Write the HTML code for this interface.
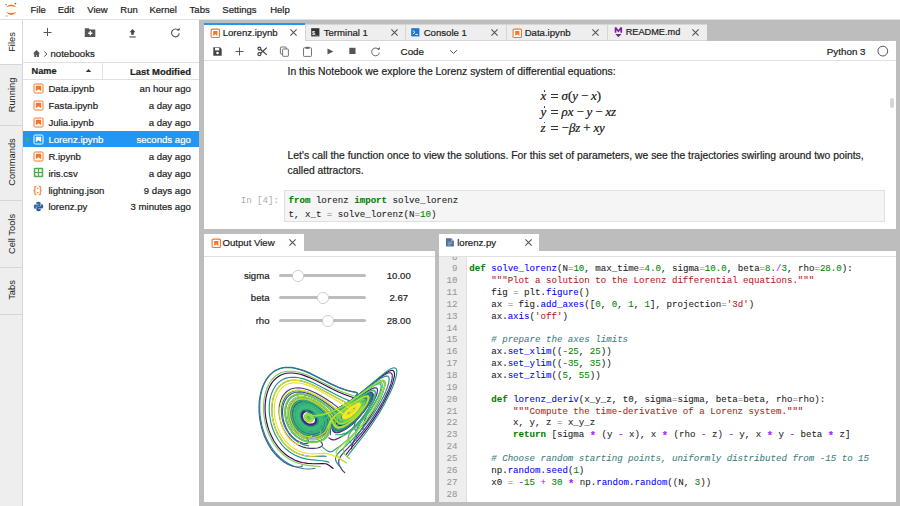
<!DOCTYPE html>
<html><head><meta charset="utf-8"><style>
html,body{margin:0;padding:0;width:900px;height:506px;overflow:hidden;background:#fff;position:relative}
.a{position:absolute}
.t{white-space:pre;-webkit-text-stroke:0.2px currentColor}
i{font-style:italic}
b{font-weight:700}
</style></head><body>
<div class="a" style="left:0px;top:0px;width:900px;height:19px;background:#fff;"></div><div class="a" style="left:0px;top:19px;width:900px;height:1px;background:#E0E0E0;"></div><svg class="a" style="left:0px;top:0px;" width="24" height="19" viewBox="0 0 24 19"><path d="M5.8 7.6 Q11.3 1.2 16.8 7.6 Q11.3 5.0 5.8 7.6z" fill="#F37726"/>
<path d="M5.8 11.8 Q11.3 18.2 16.8 11.8 Q11.3 14.4 5.8 11.8z" fill="#F37726"/>
<circle cx="6.1" cy="4.7" r="0.75" fill="#767677"/><circle cx="15.4" cy="3.5" r="0.85" fill="#616262"/><circle cx="6.9" cy="16" r="0.75" fill="#989798"/></svg><div class="a t" style="left:30.5px;top:4.03px;line-height:12.35px;font-size:9.5px;color:#222222;font-weight:400;font-family:'Liberation Sans', sans-serif;font-style:normal;">File</div><div class="a t" style="left:57.699999999999996px;top:4.03px;line-height:12.35px;font-size:9.5px;color:#222222;font-weight:400;font-family:'Liberation Sans', sans-serif;font-style:normal;">Edit</div><div class="a t" style="left:87.3px;top:4.03px;line-height:12.35px;font-size:9.5px;color:#222222;font-weight:400;font-family:'Liberation Sans', sans-serif;font-style:normal;">View</div><div class="a t" style="left:120.3px;top:4.03px;line-height:12.35px;font-size:9.5px;color:#222222;font-weight:400;font-family:'Liberation Sans', sans-serif;font-style:normal;">Run</div><div class="a t" style="left:149.5px;top:4.03px;line-height:12.35px;font-size:9.5px;color:#222222;font-weight:400;font-family:'Liberation Sans', sans-serif;font-style:normal;">Kernel</div><div class="a t" style="left:189.60000000000002px;top:4.03px;line-height:12.35px;font-size:9.5px;color:#222222;font-weight:400;font-family:'Liberation Sans', sans-serif;font-style:normal;">Tabs</div><div class="a t" style="left:222.3px;top:4.03px;line-height:12.35px;font-size:9.5px;color:#222222;font-weight:400;font-family:'Liberation Sans', sans-serif;font-style:normal;">Settings</div><div class="a t" style="left:270.2px;top:4.03px;line-height:12.35px;font-size:9.5px;color:#222222;font-weight:400;font-family:'Liberation Sans', sans-serif;font-style:normal;">Help</div><div class="a" style="left:199px;top:20px;width:701px;height:486px;background:#BDBDBD;"></div><div class="a" style="left:0px;top:20px;width:22px;height:486px;background:#EEEEEE;"></div><div class="a" style="left:22px;top:20px;width:1px;height:486px;background:#D6D6D6;"></div><div class="a" style="left:0px;top:20px;width:22px;height:44.5px;background:#fff;"></div><div class="a" style="left:0px;top:64.0px;width:22px;height:1.0px;background:#D6D6D6;"></div><div class="a" style="left:-38px;top:36px;width:100px;height:12px;line-height:12px;text-align:center;font-size:9.3px;color:#222222;font-family:'Liberation Sans', sans-serif;transform:rotate(-90deg);white-space:pre">Files</div><div class="a" style="left:0px;top:124.5px;width:22px;height:1.0px;background:#D6D6D6;"></div><div class="a" style="left:-38px;top:89px;width:100px;height:12px;line-height:12px;text-align:center;font-size:9.3px;color:#222222;font-family:'Liberation Sans', sans-serif;transform:rotate(-90deg);white-space:pre">Running</div><div class="a" style="left:0px;top:199.5px;width:22px;height:1.0px;background:#D6D6D6;"></div><div class="a" style="left:-38px;top:156px;width:100px;height:12px;line-height:12px;text-align:center;font-size:9.3px;color:#222222;font-family:'Liberation Sans', sans-serif;transform:rotate(-90deg);white-space:pre">Commands</div><div class="a" style="left:0px;top:266.5px;width:22px;height:1.0px;background:#D6D6D6;"></div><div class="a" style="left:-38px;top:228px;width:100px;height:12px;line-height:12px;text-align:center;font-size:9.3px;color:#222222;font-family:'Liberation Sans', sans-serif;transform:rotate(-90deg);white-space:pre">Cell Tools</div><div class="a" style="left:0px;top:313.5px;width:22px;height:1.0px;background:#D6D6D6;"></div><div class="a" style="left:-38px;top:284px;width:100px;height:12px;line-height:12px;text-align:center;font-size:9.3px;color:#222222;font-family:'Liberation Sans', sans-serif;transform:rotate(-90deg);white-space:pre">Tabs</div><div class="a" style="left:23px;top:20px;width:176px;height:486px;background:#fff;"></div><svg class="a" style="left:42px;top:27px;" width="10" height="10" viewBox="0 0 10 10"><path d="M5.5 1v8M1.5 5.5h8" stroke="#555" stroke-width="1"/></svg><svg class="a" style="left:84px;top:27px;" width="12" height="11" viewBox="0 0 12 11"><path d="M0.8 1.2h3.8l1.2 1.3h5.5v7.5H0.8z" fill="#555"/><path d="M6.3 4.1v4.2M4.2 6.2h4.2" stroke="#fff" stroke-width="1.4"/></svg><svg class="a" style="left:128px;top:27px;" width="9" height="11" viewBox="0 0 9 11"><path d="M1.5 5.2L4.5 2l3 3.2H5.8v2.6H3.2V5.2z" fill="#444"/><rect x="1.3" y="9.3" width="6.4" height="1.3" fill="#666"/></svg><svg class="a" style="left:170px;top:27px;" width="11" height="11" viewBox="0 0 11 11"><path d="M8.6 3.7A3.9 3.9 0 1 0 9.3 6.4" stroke="#555" stroke-width="1.1" fill="none"/><path d="M6.5 3.3h3.2V0.8z" fill="#555"/></svg><svg class="a" style="left:32px;top:49px;" width="9" height="9" viewBox="0 0 9 9"><path d="M4.5 1L1 4.5h1.2V8h2V6h0.7v2h2V4.5H8z" fill="#555"/></svg><svg class="a" style="left:43px;top:50px;" width="6" height="8" viewBox="0 0 6 8"><path d="M1.3 1.4L3.9 4L1.3 6.6" stroke="#555" stroke-width="1" fill="none"/></svg><div class="a t" style="left:50.5px;top:48.46px;line-height:12.48px;font-size:9.6px;color:#222222;font-weight:400;font-family:'Liberation Sans', sans-serif;font-style:normal;">notebooks</div><div class="a" style="left:23px;top:62px;width:176px;height:1px;background:#E0E0E0;"></div><div class="a" style="left:23px;top:79px;width:176px;height:1px;background:#E0E0E0;"></div><div class="a" style="left:102px;top:63px;width:1px;height:16px;background:#E0E0E0;"></div><div class="a t" style="left:31.5px;top:65.72px;line-height:11.96px;font-size:9.2px;color:#222222;font-weight:700;font-family:'Liberation Sans', sans-serif;font-style:normal;">Name</div><svg class="a" style="left:85px;top:68px;" width="7" height="5" viewBox="0 0 7 5"><path d="M0.8 4L3.5 1L6.2 4z" fill="#333"/></svg><div class="a t" style="left:-409.1px;width:600px;text-align:right;top:65.56px;line-height:12.29px;font-size:9.45px;color:#222222;font-weight:700;font-family:'Liberation Sans', sans-serif;font-style:normal;">Last Modified</div><svg class="a" style="left:33px;top:83.12499999999999px;" width="11" height="11" viewBox="0 0 11 11"><rect x="1" y="1" width="9" height="9" rx="1.2" fill="#fff" stroke="#F37726" stroke-width="1"/><path d="M2.8 2.8h5.4v5.4L5.5 6.3 2.8 8.2z" fill="#F37726"/></svg><div class="a t" style="left:48.4px;top:83.48px;line-height:12.48px;font-size:9.6px;color:#222222;font-weight:400;font-family:'Liberation Sans', sans-serif;font-style:normal;">Data.ipynb</div><div class="a t" style="left:-409.2px;width:600px;text-align:right;top:83.48px;line-height:12.48px;font-size:9.6px;color:#222222;font-weight:400;font-family:'Liberation Sans', sans-serif;font-style:normal;">an hour ago</div><svg class="a" style="left:33px;top:99.97499999999998px;" width="11" height="11" viewBox="0 0 11 11"><rect x="1" y="1" width="9" height="9" rx="1.2" fill="#fff" stroke="#F37726" stroke-width="1"/><path d="M2.8 2.8h5.4v5.4L5.5 6.3 2.8 8.2z" fill="#F37726"/></svg><div class="a t" style="left:48.4px;top:100.33px;line-height:12.48px;font-size:9.6px;color:#222222;font-weight:400;font-family:'Liberation Sans', sans-serif;font-style:normal;">Fasta.ipynb</div><div class="a t" style="left:-409.2px;width:600px;text-align:right;top:100.33px;line-height:12.48px;font-size:9.6px;color:#222222;font-weight:400;font-family:'Liberation Sans', sans-serif;font-style:normal;">a day ago</div><svg class="a" style="left:33px;top:116.82499999999999px;" width="11" height="11" viewBox="0 0 11 11"><rect x="1" y="1" width="9" height="9" rx="1.2" fill="#fff" stroke="#F37726" stroke-width="1"/><path d="M2.8 2.8h5.4v5.4L5.5 6.3 2.8 8.2z" fill="#F37726"/></svg><div class="a t" style="left:48.4px;top:117.19px;line-height:12.48px;font-size:9.6px;color:#222222;font-weight:400;font-family:'Liberation Sans', sans-serif;font-style:normal;">Julia.ipynb</div><div class="a t" style="left:-409.2px;width:600px;text-align:right;top:117.19px;line-height:12.48px;font-size:9.6px;color:#222222;font-weight:400;font-family:'Liberation Sans', sans-serif;font-style:normal;">a day ago</div><div class="a" style="left:23px;top:131px;width:176px;height:16.19999999999999px;background:#2196F3;"></div><svg class="a" style="left:25px;top:137.15px;" width="5" height="5" viewBox="0 0 5 5"><circle cx="2.5" cy="2.5" r="1.8" fill="#4CAF50"/></svg><svg class="a" style="left:33px;top:133.675px;" width="11" height="11" viewBox="0 0 11 11"><rect x="1" y="1" width="9" height="9" rx="1.2" fill="#2196F3" stroke="#fff" stroke-width="1"/><path d="M2.8 2.8h5.4v5.4L5.5 6.3 2.8 8.2z" fill="#fff"/></svg><div class="a t" style="left:48.4px;top:134.03px;line-height:12.48px;font-size:9.6px;color:#fff;font-weight:400;font-family:'Liberation Sans', sans-serif;font-style:normal;">Lorenz.ipynb</div><div class="a t" style="left:-409.2px;width:600px;text-align:right;top:134.03px;line-height:12.48px;font-size:9.6px;color:#fff;font-weight:400;font-family:'Liberation Sans', sans-serif;font-style:normal;">seconds ago</div><svg class="a" style="left:33px;top:150.525px;" width="11" height="11" viewBox="0 0 11 11"><rect x="1" y="1" width="9" height="9" rx="1.2" fill="#fff" stroke="#F37726" stroke-width="1"/><path d="M2.8 2.8h5.4v5.4L5.5 6.3 2.8 8.2z" fill="#F37726"/></svg><div class="a t" style="left:48.4px;top:150.88px;line-height:12.48px;font-size:9.6px;color:#222222;font-weight:400;font-family:'Liberation Sans', sans-serif;font-style:normal;">R.ipynb</div><div class="a t" style="left:-409.2px;width:600px;text-align:right;top:150.88px;line-height:12.48px;font-size:9.6px;color:#222222;font-weight:400;font-family:'Liberation Sans', sans-serif;font-style:normal;">a day ago</div><svg class="a" style="left:33px;top:167.375px;" width="11" height="11" viewBox="0 0 11 11"><rect x="0.8" y="0.8" width="9.4" height="9.4" rx="1" fill="#4CAF50"/><rect x="2.3" y="2.3" width="2.6" height="2.6" fill="#fff"/><rect x="6.1" y="2.3" width="2.6" height="2.6" fill="#fff"/><rect x="2.3" y="6.1" width="2.6" height="2.6" fill="#fff"/><rect x="6.1" y="6.1" width="2.6" height="2.6" fill="#fff"/></svg><div class="a t" style="left:48.4px;top:167.73px;line-height:12.48px;font-size:9.6px;color:#222222;font-weight:400;font-family:'Liberation Sans', sans-serif;font-style:normal;">iris.csv</div><div class="a t" style="left:-409.2px;width:600px;text-align:right;top:167.73px;line-height:12.48px;font-size:9.6px;color:#222222;font-weight:400;font-family:'Liberation Sans', sans-serif;font-style:normal;">a day ago</div><div class="a t" style="left:33.6px;top:184.93px;line-height:11.18px;font-size:8.6px;color:#F37726;font-weight:400;font-family:'Liberation Sans', sans-serif;font-style:normal;letter-spacing:0.1px;-webkit-text-stroke:0.3px #F37726">{:}</div><div class="a t" style="left:48.4px;top:184.58px;line-height:12.48px;font-size:9.6px;color:#222222;font-weight:400;font-family:'Liberation Sans', sans-serif;font-style:normal;">lightning.json</div><div class="a t" style="left:-409.2px;width:600px;text-align:right;top:184.58px;line-height:12.48px;font-size:9.6px;color:#222222;font-weight:400;font-family:'Liberation Sans', sans-serif;font-style:normal;">9 days ago</div><svg class="a" style="left:33px;top:201.47500000000002px;" width="11" height="11" viewBox="0 0 11 11"><path d="M5.4 0.8c-2.2 0-2.1 1-2.1 1v1.3h2.2v.4H2.3S0.8 3.3 0.8 5.6s1.3 2.2 1.3 2.2h.8V6.7s0-1.3 1.3-1.3h2.2s1.2 0 1.2-1.2V2s.2-1.2-2.2-1.2z" fill="#366B9F"/><path d="M5.6 10.2c2.2 0 2.1-1 2.1-1V7.9H5.5v-.4h3.2s1.5.2 1.5-2.1-1.3-2.2-1.3-2.2h-.8v1.1s0 1.3-1.3 1.3H4.6s-1.2 0-1.2 1.2V9s-.2 1.2 2.2 1.2z" fill="#2F5E9E"/></svg><div class="a t" style="left:48.4px;top:201.44px;line-height:12.48px;font-size:9.6px;color:#222222;font-weight:400;font-family:'Liberation Sans', sans-serif;font-style:normal;">lorenz.py</div><div class="a t" style="left:-409.2px;width:600px;text-align:right;top:201.44px;line-height:12.48px;font-size:9.6px;color:#222222;font-weight:400;font-family:'Liberation Sans', sans-serif;font-style:normal;">3 minutes ago</div><div class="a" style="left:204px;top:41px;width:692px;height:19px;background:#fff;"></div><div class="a" style="left:204px;top:60px;width:692px;height:1px;background:#E0E0E0;"></div><div class="a" style="left:204px;top:61px;width:692px;height:167.5px;background:#fff;"></div><div class="a" style="left:204px;top:40px;width:503px;height:1px;background:#D6D6D6;"></div><div class="a" style="left:204px;top:23px;width:101px;height:18px;background:#fff;"></div><div class="a" style="left:204px;top:23px;width:101px;height:2px;background:#2196F3;"></div><svg class="a" style="left:209.8px;top:27.5px;" width="11" height="11" viewBox="0 0 11 11"><rect x="1.1" y="1.1" width="8.4" height="8.4" rx="1" fill="#fff" stroke="#F37726" stroke-width="1.1"/><path d="M3.2 2.9h4.2v5L5.3 6.3 3.2 7.9z" fill="#F37726"/></svg><div class="a t" style="left:222.7px;top:26.96px;line-height:12.48px;font-size:9.6px;color:#222222;font-weight:400;font-family:'Liberation Sans', sans-serif;font-style:normal;">Lorenz.ipynb</div><svg class="a" style="left:288.5px;top:28.0px;" width="9" height="9" viewBox="0 0 9 9"><path d="M1.4 1.4l6.2 6.2M7.6 1.4l-6.2 6.2" stroke="#555" stroke-width="1.1"/></svg><div class="a" style="left:305px;top:24px;width:101px;height:17px;background:#D6D6D6;"></div><div class="a" style="left:306px;top:25px;width:100px;height:15px;background:#EEEEEE;"></div><svg class="a" style="left:311.3px;top:28.0px;" width="9" height="9" viewBox="0 0 9 9"><rect x="0.2" y="0.2" width="8.2" height="8.2" fill="#333"/><text x="0.9" y="6.6" font-size="5.6" font-family="Liberation Sans" font-weight="700" fill="#fff">$_</text></svg><div class="a t" style="left:323.7px;top:26.96px;line-height:12.48px;font-size:9.6px;color:#222222;font-weight:400;font-family:'Liberation Sans', sans-serif;font-style:normal;">Terminal 1</div><svg class="a" style="left:389.5px;top:28.0px;" width="9" height="9" viewBox="0 0 9 9"><path d="M1.4 1.4l6.2 6.2M7.6 1.4l-6.2 6.2" stroke="#555" stroke-width="1.1"/></svg><div class="a" style="left:405px;top:24px;width:101px;height:17px;background:#D6D6D6;"></div><div class="a" style="left:406px;top:25px;width:100px;height:15px;background:#EEEEEE;"></div><svg class="a" style="left:411.3px;top:28.0px;" width="9" height="9" viewBox="0 0 9 9"><rect x="0.2" y="0.2" width="8.2" height="8.2" fill="#1976D2"/><path d="M1.8 2.5l2.2 1.8-2.2 1.8M4.3 6.5h2.6" stroke="#fff" stroke-width="0.9" fill="none"/></svg><div class="a t" style="left:423.7px;top:26.96px;line-height:12.48px;font-size:9.6px;color:#222222;font-weight:400;font-family:'Liberation Sans', sans-serif;font-style:normal;">Console 1</div><svg class="a" style="left:489.5px;top:28.0px;" width="9" height="9" viewBox="0 0 9 9"><path d="M1.4 1.4l6.2 6.2M7.6 1.4l-6.2 6.2" stroke="#555" stroke-width="1.1"/></svg><div class="a" style="left:506px;top:24px;width:101px;height:17px;background:#D6D6D6;"></div><div class="a" style="left:507px;top:25px;width:100px;height:15px;background:#EEEEEE;"></div><svg class="a" style="left:511.8px;top:27.5px;" width="11" height="11" viewBox="0 0 11 11"><rect x="1.1" y="1.1" width="8.4" height="8.4" rx="1" fill="#fff" stroke="#F37726" stroke-width="1.1"/><path d="M3.2 2.9h4.2v5L5.3 6.3 3.2 7.9z" fill="#F37726"/></svg><div class="a t" style="left:524.7px;top:26.96px;line-height:12.48px;font-size:9.6px;color:#222222;font-weight:400;font-family:'Liberation Sans', sans-serif;font-style:normal;">Data.ipynb</div><svg class="a" style="left:590.5px;top:28.0px;" width="9" height="9" viewBox="0 0 9 9"><path d="M1.4 1.4l6.2 6.2M7.6 1.4l-6.2 6.2" stroke="#555" stroke-width="1.1"/></svg><div class="a" style="left:607px;top:24px;width:100px;height:17px;background:#D6D6D6;"></div><div class="a" style="left:608px;top:25px;width:98.5px;height:15px;background:#EEEEEE;"></div><svg class="a" style="left:614px;top:26px;" width="9" height="12" viewBox="0 0 9 12"><path d="M0.7 6.8V1.2h1.7l2 2.7 2-2.7h1.7v5.6H6.4V4L4.4 6.6 2.4 4v2.8z" fill="#7B1FA2"/><path d="M1.3 8h6.2L4.4 11.3z" fill="#7B1FA2"/></svg><div class="a t" style="left:625.7px;top:27.22px;line-height:11.96px;font-size:9.2px;color:#222222;font-weight:400;font-family:'Liberation Sans', sans-serif;font-style:normal;">README.md</div><svg class="a" style="left:690.5px;top:28.0px;" width="9" height="9" viewBox="0 0 9 9"><path d="M1.4 1.4l6.2 6.2M7.6 1.4l-6.2 6.2" stroke="#555" stroke-width="1.1"/></svg><svg class="a" style="left:212px;top:46px;" width="11" height="11" viewBox="0 0 11 11"><path d="M1.3 1.3h6.6l1.8 1.8v6.6H1.3z" fill="#444"/><rect x="3" y="1.8" width="4.2" height="2.6" fill="#fff"/><circle cx="5.5" cy="7" r="1.3" fill="#fff"/></svg><svg class="a" style="left:235px;top:46px;" width="10" height="10" viewBox="0 0 10 10"><path d="M4.5 1.5v8M0.5 5.5h8" stroke="#555" stroke-width="1"/></svg><svg class="a" style="left:257px;top:46px;" width="12" height="11" viewBox="0 0 12 11"><circle cx="2.4" cy="2.6" r="1.5" fill="none" stroke="#444" stroke-width="1.2"/><circle cx="2.4" cy="8.2" r="1.5" fill="none" stroke="#444" stroke-width="1.2"/><path d="M3.7 3.5L9.8 8.9M3.7 7.3L9.8 1.6" stroke="#444" stroke-width="1.25"/></svg><svg class="a" style="left:279px;top:46px;" width="11" height="11" viewBox="0 0 11 11"><rect x="1.4" y="1" width="5.8" height="7" rx="0.6" fill="none" stroke="#666" stroke-width="0.9"/><rect x="3.6" y="3" width="5.8" height="7.3" rx="0.6" fill="#fff" stroke="#666" stroke-width="0.9"/></svg><svg class="a" style="left:302px;top:46px;" width="11" height="11" viewBox="0 0 11 11"><rect x="1.5" y="1.8" width="8" height="8.6" rx="0.7" fill="none" stroke="#666" stroke-width="0.9"/><rect x="3.6" y="0.8" width="3.8" height="2" fill="#666"/></svg><svg class="a" style="left:326px;top:46px;" width="9" height="10" viewBox="0 0 9 10"><path d="M1.5 2.4L7.3 5.4L1.5 8.6z" fill="#555"/></svg><svg class="a" style="left:348px;top:46px;" width="9" height="10" viewBox="0 0 9 10"><rect x="1.3" y="1.8" width="6.2" height="6.2" fill="#555"/></svg><svg class="a" style="left:369.5px;top:45.5px;" width="11" height="11" viewBox="0 0 11 11"><path d="M8.9 3.9A3.9 3.9 0 1 0 9.4 6.6" stroke="#666" stroke-width="1" fill="none"/><path d="M6.8 3.6h3.1V1z" fill="#666"/></svg><div class="a t" style="left:400.6px;top:46.13px;line-height:12.74px;font-size:9.8px;color:#222222;font-weight:400;font-family:'Liberation Sans', sans-serif;font-style:normal;">Code</div><svg class="a" style="left:449px;top:49px;" width="9" height="6" viewBox="0 0 9 6"><path d="M1 1.2l3.5 3.2L8 1.2" stroke="#555" stroke-width="1" fill="none"/></svg><div class="a t" style="left:265.5px;width:600px;text-align:right;top:45.93px;line-height:12.74px;font-size:9.8px;color:#222222;font-weight:400;font-family:'Liberation Sans', sans-serif;font-style:normal;">Python 3</div><svg class="a" style="left:876px;top:45px;" width="14" height="13" viewBox="0 0 14 13"><circle cx="6.8" cy="6.1" r="4.9" fill="none" stroke="#555" stroke-width="1"/></svg><div class="a t" style="left:287.6px;top:64.67px;line-height:13.47px;font-size:10.36px;color:#222222;font-weight:400;font-family:'Liberation Sans', sans-serif;font-style:normal;">In this Notebook we explore the Lorenz system of differential equations:</div><div class="a t" style="left:540.6px;top:88.11px;line-height:16.77px;font-size:12.9px;color:#111;font-weight:400;font-family:'Liberation Serif', serif;font-style:normal;"><i>x</i></div><div class="a" style="left:551px;top:94.3px;width:7.2000000000000455px;height:0.9000000000000057px;background:#333;"></div><div class="a" style="left:551px;top:96.9px;width:7.2000000000000455px;height:0.8999999999999915px;background:#333;"></div><div class="a t" style="left:561.6px;top:88.11px;line-height:16.77px;font-size:12.9px;color:#111;font-weight:400;font-family:'Liberation Serif', serif;font-style:normal;"><i>σ</i>(<i>y</i><span style="margin:0 2.9px">−</span><i>x</i>)</div><div class="a" style="left:543.6px;top:90.4px;width:1.2999999999999545px;height:1.2999999999999972px;background:#222;border-radius:50%;"></div><div class="a t" style="left:540.6px;top:104.11px;line-height:16.77px;font-size:12.9px;color:#111;font-weight:400;font-family:'Liberation Serif', serif;font-style:normal;"><i>y</i></div><div class="a" style="left:551px;top:110.3px;width:7.2000000000000455px;height:0.9000000000000057px;background:#333;"></div><div class="a" style="left:551px;top:112.9px;width:7.2000000000000455px;height:0.8999999999999915px;background:#333;"></div><div class="a t" style="left:561.6px;top:104.11px;line-height:16.77px;font-size:12.9px;color:#111;font-weight:400;font-family:'Liberation Serif', serif;font-style:normal;"><i>ρx</i><span style="margin:0 2.9px">−</span><i>y</i><span style="margin:0 2.9px">−</span><i>xz</i></div><div class="a" style="left:543.6px;top:106.4px;width:1.2999999999999545px;height:1.2999999999999972px;background:#222;border-radius:50%;"></div><div class="a t" style="left:540.6px;top:119.71px;line-height:16.77px;font-size:12.9px;color:#111;font-weight:400;font-family:'Liberation Serif', serif;font-style:normal;"><i>z</i></div><div class="a" style="left:551px;top:125.89999999999999px;width:7.2000000000000455px;height:0.9000000000000057px;background:#333;"></div><div class="a" style="left:551px;top:128.5px;width:7.2000000000000455px;height:0.9000000000000057px;background:#333;"></div><div class="a t" style="left:561.6px;top:119.71px;line-height:16.77px;font-size:12.9px;color:#111;font-weight:400;font-family:'Liberation Serif', serif;font-style:normal;">−<i>βz</i><span style="margin:0 2.9px">+</span><i>xy</i></div><div class="a" style="left:543.6px;top:122.0px;width:1.2999999999999545px;height:1.2999999999999972px;background:#222;border-radius:50%;"></div><div class="a t" style="left:287.6px;top:148.76px;line-height:13.47px;font-size:10.36px;color:#222222;font-weight:400;font-family:'Liberation Sans', sans-serif;font-style:normal;">Let&#x27;s call the function once to view the solutions. For this set of parameters, we see the trajectories swirling around two points,</div><div class="a t" style="left:287.6px;top:164.16px;line-height:13.47px;font-size:10.36px;color:#222222;font-weight:400;font-family:'Liberation Sans', sans-serif;font-style:normal;">called attractors.</div><div class="a" style="left:284px;top:190px;width:601px;height:32px;background:#E0E0E0;"></div><div class="a" style="left:285px;top:191px;width:599px;height:30px;background:#F5F5F5;"></div><div class="a t" style="left:-321px;width:600px;text-align:right;top:195.35px;line-height:11.9px;font-size:9.15px;color:#B0B0B0;font-weight:400;font-family:'Liberation Mono', monospace;font-style:normal;-webkit-text-stroke:0.08px currentColor;">In [4]:</div><div class="a t" style="left:288.5px;top:195.35px;line-height:11.9px;font-size:9.15px;color:#222;font-weight:400;font-family:'Liberation Mono', monospace;font-style:normal;-webkit-text-stroke:0.08px currentColor;white-space:pre;"><b style="color:#008000">from</b> lorenz <b style="color:#008000">import</b> solve_lorenz</div><div class="a t" style="left:288.5px;top:208.95px;line-height:11.9px;font-size:9.15px;color:#222;font-weight:400;font-family:'Liberation Mono', monospace;font-style:normal;-webkit-text-stroke:0.08px currentColor;white-space:pre;">t, x_t <span style="color:#8a8a8a">=</span> solve_lorenz(N<span style="color:#8a8a8a">=</span><span style="color:#008800">10</span>)</div><div class="a" style="left:890px;top:98px;width:4px;height:10px;background:#D6D6D6;border-radius:2px;"></div><div class="a" style="left:204px;top:251px;width:231px;height:5px;background:#fff;"></div><div class="a" style="left:204px;top:256px;width:231px;height:1px;background:#E0E0E0;"></div><div class="a" style="left:204px;top:257px;width:231px;height:244.60000000000002px;background:#fff;"></div><div class="a" style="left:204px;top:234px;width:100px;height:17px;background:#fff;"></div><svg class="a" style="left:210.5px;top:237.5px;" width="11" height="11" viewBox="0 0 11 11"><rect x="1.1" y="1.1" width="8.4" height="8.4" rx="1" fill="#fff" stroke="#F37726" stroke-width="1.1"/><path d="M3.2 2.9h4.2v5L5.3 6.3 3.2 7.9z" fill="#F37726"/></svg><div class="a t" style="left:222.5px;top:237.06px;line-height:12.48px;font-size:9.6px;color:#222222;font-weight:400;font-family:'Liberation Sans', sans-serif;font-style:normal;">Output View</div><svg class="a" style="left:288px;top:238px;" width="9" height="9" viewBox="0 0 9 9"><path d="M1.4 1.4l6.2 6.2M7.6 1.4l-6.2 6.2" stroke="#555" stroke-width="1.1"/></svg><div class="a t" style="left:-330.5px;width:600px;text-align:right;top:270.06px;line-height:12.48px;font-size:9.6px;color:#222222;font-weight:400;font-family:'Liberation Sans', sans-serif;font-style:normal;">sigma</div><div class="a" style="left:279px;top:274px;width:87px;height:3px;background:#BDBDBD;border-radius:1.5px;"></div><svg class="a" style="left:290.5px;top:268.6px;" width="14" height="14" viewBox="0 0 14 14"><circle cx="7" cy="7" r="5.6" fill="#fff" stroke="#C8C8C8" stroke-width="0.9"/></svg><div class="a t" style="left:98.80000000000001px;width:600px;text-align:center;top:270.06px;line-height:12.48px;font-size:9.6px;color:#222222;font-weight:400;font-family:'Liberation Sans', sans-serif;font-style:normal;">10.00</div><div class="a t" style="left:-330.5px;width:600px;text-align:right;top:292.46px;line-height:12.48px;font-size:9.6px;color:#222222;font-weight:400;font-family:'Liberation Sans', sans-serif;font-style:normal;">beta</div><div class="a" style="left:279px;top:296px;width:87px;height:3px;background:#BDBDBD;border-radius:1.5px;"></div><svg class="a" style="left:316.4px;top:291px;" width="14" height="14" viewBox="0 0 14 14"><circle cx="7" cy="7" r="5.6" fill="#fff" stroke="#C8C8C8" stroke-width="0.9"/></svg><div class="a t" style="left:98.80000000000001px;width:600px;text-align:center;top:292.46px;line-height:12.48px;font-size:9.6px;color:#222222;font-weight:400;font-family:'Liberation Sans', sans-serif;font-style:normal;">2.67</div><div class="a t" style="left:-330.5px;width:600px;text-align:right;top:315.16px;line-height:12.48px;font-size:9.6px;color:#222222;font-weight:400;font-family:'Liberation Sans', sans-serif;font-style:normal;">rho</div><div class="a" style="left:279px;top:319px;width:87px;height:3px;background:#BDBDBD;border-radius:1.5px;"></div><svg class="a" style="left:321.3px;top:313.7px;" width="14" height="14" viewBox="0 0 14 14"><circle cx="7" cy="7" r="5.6" fill="#fff" stroke="#C8C8C8" stroke-width="0.9"/></svg><div class="a t" style="left:98.80000000000001px;width:600px;text-align:center;top:315.16px;line-height:12.48px;font-size:9.6px;color:#222222;font-weight:400;font-family:'Liberation Sans', sans-serif;font-style:normal;">28.00</div><svg class="a" style="left:0;top:0" width="900" height="506" viewBox="0 0 900 506"><g stroke-width="1.15" stroke-linejoin="round" stroke-linecap="round"><polyline fill="none" stroke="#440154" points="333.1,468.5 329.0,465.2 327.5,464.4 325.6,463.8 322.8,463.5 313.4,463.7 307.6,463.4 302.0,462.5 298.7,461.6 295.2,460.3 289.6,457.3 285.6,454.5 281.6,450.9 277.6,446.3 273.8,440.7 270.5,434.1 269.0,430.4 267.7,426.5 266.7,422.5 265.9,418.3 265.3,414.0 265.1,409.6 265.1,405.3 265.5,401.1 266.1,397.0 267.1,393.1 268.4,389.4 269.9,386.1 271.7,383.1 273.7,380.5 276.0,378.3 278.4,376.5 280.9,375.0 283.6,374.0 286.4,373.3 289.1,373.0 292.0,373.0 294.8,373.2 300.4,374.3 303.1,375.1 308.4,377.1 315.8,380.5 331.8,388.8 337.9,391.7 343.9,394.3 353.0,397.5 353.7,398.0 354.1,398.7 354.0,399.6 353.4,400.6 351.5,402.7 343.3,411.1 341.5,413.4 340.2,415.6 339.6,417.6 339.7,419.3 340.6,420.5 342.1,421.1 343.4,421.2 345.0,420.8 348.3,419.4 351.9,417.0 355.4,414.0 359.2,409.6 361.8,405.7 362.6,403.9 363.0,402.5 362.8,401.5 362.4,401.1 361.3,401.0 359.4,401.5 354.3,404.1 346.9,409.1 343.9,411.4 341.6,413.5 340.2,415.2 339.2,416.7 338.5,418.0 338.2,419.4 338.3,420.6 338.8,421.7 339.7,422.5 340.9,422.9 342.2,422.9 343.8,422.6 345.8,421.9 347.7,421.0 351.6,418.4 356.1,414.4 360.0,409.9 363.2,405.2 364.1,403.1 364.6,401.4 364.4,400.2 363.9,399.7 362.7,399.6 360.9,400.1 358.1,401.4 355.0,403.1 349.9,406.4 345.3,409.6 341.7,412.5 339.4,414.7 337.9,416.4 336.8,418.1 336.2,419.8 335.9,421.4 336.1,423.1 336.9,424.4 337.9,425.2 339.4,425.6 341.1,425.6 342.9,425.2 345.1,424.3 347.2,423.2 349.6,421.7 352.3,419.6 357.0,415.3 361.7,409.7 365.1,404.6 366.3,401.9 366.9,400.2 366.9,398.5 366.4,397.7 365.8,397.5 365.1,397.5 363.0,398.0 359.7,399.6 355.8,401.8 348.8,406.4 342.3,410.9 338.5,413.9 335.5,416.7 333.9,418.9 332.7,421.2 332.0,423.8 331.9,426.5 332.2,429.1 333.0,431.0 334.3,432.2 336.0,432.7 337.8,432.6 340.2,431.9 342.9,430.7 345.9,429.0 348.8,427.0 352.2,424.2 355.2,421.5 358.4,418.2 364.2,411.2 367.3,406.7 369.3,403.4 371.0,400.1 372.1,397.3 372.5,394.9 372.3,393.3 371.7,392.7 371.3,392.5 370.2,392.5 368.9,392.8 366.3,393.8 362.3,396.1 335.1,413.5 330.9,416.3 327.2,419.6 321.6,426.3 318.9,428.6 317.0,429.7 315.0,430.4 312.7,430.8 310.6,430.8"/>
<polyline fill="none" stroke="#470d60" points="346.3,454.3 349.6,450.0 361.0,436.3 367.8,427.6 375.2,416.9 379.1,410.8 382.9,404.3 386.4,397.6 389.5,390.9 392.1,384.6 393.0,381.7 394.3,376.7 394.5,374.6 394.4,372.9 394.0,371.7 393.3,370.8 392.3,370.4 391.0,370.5 389.4,371.0 385.4,373.2 377.8,379.0 359.8,393.8 350.9,400.4 345.3,404.1 340.1,407.1 335.3,409.5 330.9,411.3 325.0,413.0 320.0,413.8 315.8,413.9 313.4,413.6 311.3,413.1 309.5,412.4 307.3,411.2 306.2,410.4 304.9,409.0 304.2,407.6 304.0,406.3 304.3,405.2 305.1,404.1 306.9,403.5 309.2,403.6 312.2,404.5 315.1,406.2 318.1,408.6 320.6,411.2 322.7,414.1 324.1,417.0 324.9,419.6 325.2,422.3 325.0,424.8 324.3,427.3 323.2,429.3 321.6,431.2 319.6,432.6 317.0,433.8 314.6,434.4 311.7,434.6 309.0,434.4 305.9,433.6 303.4,432.4 300.8,430.8 298.2,428.5 296.5,426.4 294.5,423.1 293.3,420.3 292.5,417.3 292.2,414.3 292.4,411.3 293.0,408.6 294.2,406.2 295.8,404.2 297.0,403.2 298.4,402.4 301.5,401.5 303.1,401.4 305.6,401.5 309.7,402.6 314.2,404.6 318.6,407.5 322.5,411.0 325.7,415.0 327.8,418.9 329.0,423.1 329.4,427.9 329.0,432.4 327.9,435.4 326.0,437.7 323.4,439.6 319.9,441.2 316.1,442.0 312.5,442.3 309.0,442.0 305.7,441.3 302.1,440.0 299.3,438.5 296.4,436.4 293.5,433.8 290.8,430.5 288.5,426.5 286.6,422.0 285.7,418.7 285.0,413.7 285.0,410.3 285.5,407.1 286.3,404.1 287.5,401.4 289.0,399.1 290.9,397.2 291.9,396.4 294.1,395.2 296.5,394.4 300.3,394.0 302.9,394.1 306.7,394.9 310.4,396.1 313.9,397.6 318.1,399.9 321.8,402.2 326.4,405.5 330.4,409.0 339.5,418.4 341.5,419.6 343.7,419.9 346.3,419.4 349.3,418.0 352.9,415.5 356.2,412.5 359.2,408.9 361.3,405.4 361.9,404.0 362.0,402.8 361.7,402.1 361.2,401.8 360.1,401.8 358.3,402.4 353.1,405.2 346.5,409.8 342.3,413.6 341.0,415.1 340.1,416.5 339.6,417.9 339.5,419.1 339.8,420.2 340.4,420.9 341.5,421.4 342.9,421.6 344.4,421.3 345.9,420.8 349.1,419.2 352.9,416.4 356.6,413.0 360.0,408.9 362.5,404.9 363.1,403.2 363.3,402.2 363.1,401.2 362.6,400.8 361.5,400.7 359.4,401.3 354.1,404.2 346.0,409.6 343.1,412.0 340.9,414.1 339.5,415.7 338.6,417.2 337.9,418.7 337.7,420.1 337.9,421.3 338.5,422.4 339.6,423.1 340.9,423.4 342.9,423.3 345.1,422.6 347.4,421.5 350.0,419.9 352.9,417.7 355.5,415.3 358.1,412.6 360.6,409.6"/>
<polyline fill="none" stroke="#481a6c" points="351.6,448.8 351.8,446.7 352.3,444.5 353.2,442.2 355.1,438.7 357.6,434.8 366.5,422.0 371.7,414.0 376.8,405.3 380.3,398.6 382.9,392.2 384.5,386.9 384.7,384.2 384.6,383.1 384.3,382.3 383.7,381.7 383.1,381.4 381.1,381.4 378.6,382.4 375.4,384.1 369.8,387.9 357.4,397.0 351.3,401.2 343.7,406.0 337.0,409.5 332.7,411.5 328.9,413.0 322.0,415.0 319.0,415.6 315.6,415.9 312.7,416.0 310.0,415.7 310.9,417.1 311.1,418.3 310.8,419.4 309.8,419.9 309.0,420.0 308.2,419.7 307.4,419.2 306.9,418.4 306.6,417.6 306.6,416.8 306.9,416.2 307.5,415.8 308.4,415.7 309.4,416.0 310.2,416.5 310.8,417.4 311.1,418.2 311.0,419.1 310.5,419.8 309.8,420.1 308.9,420.1 308.1,419.8 307.3,419.2 306.7,418.4 306.5,417.5 306.5,416.8 306.8,416.1 307.4,415.7 308.4,415.6 309.4,415.8 310.2,416.4 310.9,417.3 311.2,418.3 311.1,419.2 310.6,419.9 309.8,420.2 308.9,420.2 308.0,419.9 307.2,419.3 306.6,418.5 306.3,417.6 306.3,416.7 306.7,416.1 307.3,415.6 308.3,415.4 309.4,415.7 310.3,416.3 311.1,417.3 311.4,418.3 311.3,419.3 310.7,420.0 309.9,420.4 309.0,420.4 308.0,420.0 307.1,419.4 306.5,418.5 306.2,417.5 306.2,416.6 306.6,415.9 307.3,415.4 308.3,415.3 309.5,415.6 310.5,416.3 311.2,417.3 311.6,418.4 311.4,419.4 310.8,420.2 310.0,420.5 308.9,420.5 307.9,420.2 307.0,419.5 306.3,418.5 306.0,417.4 306.1,416.5 306.5,415.7 307.2,415.2 308.7,415.2 310.3,416.0 311.4,417.3 311.7,418.8 311.6,419.5 311.2,420.1 310.0,420.7 308.4,420.6 307.0,419.6"/>
<polyline fill="none" stroke="#482576" points="328.8,437.8 331.2,439.4 333.0,439.9 335.3,439.6 338.4,438.3 342.7,435.9 347.5,432.5 352.2,428.6 356.8,424.2 361.8,418.6 366.0,413.2 370.1,407.3 372.9,402.7 375.8,396.8 377.1,393.0 377.5,390.1 377.2,388.7 376.9,388.3 375.8,387.8 374.4,387.9 372.4,388.5 370.2,389.7 366.2,392.0 351.2,402.1 343.0,407.3 335.3,411.6 323.0,417.8 315.7,422.5 313.3,423.6 310.9,424.1 308.3,423.7 306.0,422.5 304.1,420.6 303.2,419.3 302.8,418.1 302.5,415.7 302.7,414.6 303.2,413.6 303.8,412.8 304.6,412.2 305.6,411.8 306.9,411.6 308.3,411.8 309.7,412.2 311.0,412.8 312.4,413.8 314.4,416.0 315.1,417.3 315.5,418.6 315.6,419.8 315.5,421.0 315.0,422.2 314.3,423.1 313.4,423.8 312.2,424.3 309.9,424.5 307.3,423.9 305.0,422.4 303.3,420.3 302.2,417.8 302.0,416.5 302.0,415.3 302.7,413.3 303.4,412.4 304.3,411.8 305.3,411.3 306.8,411.1 308.3,411.3 309.8,411.8 311.2,412.5 312.7,413.5 314.0,414.8 315.0,416.1 315.7,417.5 316.1,418.8 316.1,420.1 316.0,421.3 315.4,422.6 314.7,423.5 313.7,424.3 312.5,424.8 310.0,425.1 308.6,424.9 307.2,424.4 304.9,423.0 303.0,420.9 301.8,418.2 301.5,416.7 301.5,415.3 302.1,413.1 302.8,412.1 303.8,411.4 304.9,410.9 306.5,410.6 308.1,410.8 309.7,411.2 311.3,412.0 312.9,413.1 314.3,414.4 315.4,415.9 316.2,417.3 316.6,418.7 316.8,420.1 316.6,421.6 316.0,422.9 315.2,423.9 314.0,424.9 312.7,425.4 311.2,425.7 309.8,425.7 307.0,424.9 305.5,424.1 304.3,423.2 302.3,420.7 301.5,419.3 301.0,417.7 300.9,415.0 301.2,413.6 301.6,412.6 302.5,411.5 303.5,410.7 304.8,410.2 306.5,410.0 308.3,410.2 310.1,410.8 311.7,411.6 313.5,412.9 315.0,414.3 316.1,415.9 316.9,417.4 317.4,419.1 317.5,420.6 317.2,422.1 316.6,423.5 315.7,424.5 314.4,425.5 313.0,426.1 311.4,426.4 309.9,426.4 306.9,425.6 304.2,423.9 303.0,422.8 301.9,421.4 301.1,419.8 300.5,418.1 300.2,416.4 300.2,415.1 300.4,413.4 300.9,412.4 301.7,411.1 302.9,410.2 304.2,409.6 306.1,409.3 307.7,409.4 309.6,410.0 311.5,410.8 313.5,412.1 315.2,413.6 316.5,415.3 317.4,416.9 318.1,418.8 318.3,420.3 318.2,422.0 317.6,423.5 316.9,424.7 315.6,425.8 314.3,426.6"/>
<polyline fill="none" stroke="#46307e" points="344.7,472.6 342.7,470.6 341.2,468.7 339.3,465.3 338.9,463.9 338.7,461.8 338.9,459.9 339.6,458.1 341.1,455.6 343.4,452.8 356.2,439.1 363.7,430.3 370.5,421.3 377.8,410.4 381.3,404.4 384.6,398.3 388.8,389.2 390.9,383.7 392.1,378.9 392.3,375.4 392.0,374.1 391.4,373.2 390.6,372.8 389.5,372.7 388.1,373.0 384.5,374.7 377.6,379.6 361.0,392.9 350.0,401.1 344.8,404.4 340.0,407.1 335.6,409.3 331.5,411.0 326.1,412.8 321.4,413.7 317.5,413.9 313.2,413.6 311.5,413.1 309.3,412.3 306.9,410.6 306.0,409.6 305.6,408.3 305.7,407.2 306.4,406.4 307.8,406.0 309.9,406.2 311.9,407.0 314.2,408.3 316.4,410.0 318.5,412.3 320.1,414.6 321.1,416.9 321.8,419.0 322.0,421.1 321.9,423.0 321.3,425.0 320.3,426.9 319.0,428.3 317.3,429.5 315.5,430.3 313.4,430.8 311.3,430.9 309.1,430.7 306.6,430.0 304.6,429.1 302.6,427.8 300.6,426.1 298.9,424.0 297.4,421.5 296.6,419.4 295.9,416.5 295.8,414.4 296.1,411.6 296.8,409.7 297.8,408.1 299.1,406.8 301.1,405.6 303.4,405.0 306.5,405.1 309.6,405.9 313.1,407.4 316.1,409.4 318.9,411.9 321.2,414.9 322.7,417.6 323.6,420.2 323.8,422.9 323.4,425.5 322.3,427.9 320.8,429.8 318.9,431.3 316.3,432.5 314.0,433.0 311.3,433.2 308.7,432.9 305.8,432.1 303.5,430.9 301.1,429.3 298.8,427.2 297.3,425.3 295.5,422.2 294.5,419.7 293.8,417.1 293.6,414.4 293.9,410.9 294.7,408.6 295.8,406.6 297.3,404.9 299.8,403.5 301.2,403.1 303.4,402.8 307.1,403.1 310.7,404.2 314.7,406.2 318.6,409.0 321.9,412.3 324.2,415.4 325.8,418.6 326.8,422.0 326.9,425.6 326.3,428.6 325.0,431.4 323.1,433.6 320.6,435.3 317.4,436.6 314.2,437.2 310.9,437.3 307.7,436.8 304.1,435.7 301.1,434.1 298.1,431.8 295.9,429.6 293.9,427.0 292.2,423.9 290.8,420.5 289.9,416.9 289.6,413.2 290.0,409.6 290.9,406.3 291.9,404.4 293.7,402.0 295.3,400.8 297.8,399.5 299.7,399.0 302.6,398.8 305.5,399.0 308.4,399.7 311.2,400.8 314.7,402.4 317.8,404.3 321.2,406.7 324.0,409.1 326.6,411.8 328.5,414.2 330.0,416.4 333.9,423.9 335.3,425.9 336.2,426.6 337.2,427.2 338.4,427.4 339.7,427.5 341.4,427.2 343.6,426.4 348.1,424.0 353.2,420.0 357.8,415.6 362.4,410.2 366.2,404.3 367.7,401.2 368.4,399.2 368.5,397.7 368.2,396.6 367.3,396.1 365.4,396.3 362.7,397.4 359.5,399.1 353.3,403.0 343.6,409.4 338.8,412.8 335.7,415.3 333.2,417.8 331.3,420.3 329.8,423.3 328.0,428.9 327.0,431.3 325.4,433.8 323.3,435.7"/>
<polyline fill="none" stroke="#443b84" points="320.6,441.2 322.1,443.4 322.5,444.8 322.4,445.5 322.0,446.1 320.4,447.1 317.5,448.0 313.9,448.4 310.0,448.4 306.3,447.9 303.2,447.1 301.0,446.3 297.4,444.5 295.0,443.0 292.5,441.1 290.0,438.7 286.5,434.4 283.3,429.0 280.9,422.8 279.8,418.2 279.4,415.9 279.1,411.2 279.3,406.6 279.7,404.4 280.8,400.2 282.5,396.5 283.6,394.9 286.0,392.2 287.4,391.0 290.3,389.3 291.9,388.7 295.2,388.0 298.6,387.9 302.0,388.2 305.3,389.0 308.6,390.0 311.7,391.2 316.1,393.3 323.7,397.6 332.9,403.6 343.7,411.6 346.3,413.0 347.6,413.3 348.8,413.3 350.2,412.9 351.7,412.1 353.3,410.9 354.7,409.5 355.4,408.1 355.3,407.4 354.5,407.3 353.1,407.9 351.2,409.0 349.4,410.4 348.2,411.7 347.5,412.8 347.3,413.7 347.7,414.2 348.6,414.2 350.0,413.7 352.9,411.7 354.3,410.3 355.3,409.0 355.8,407.8 355.6,407.2 354.7,407.1 353.1,407.8 351.1,409.0 349.2,410.5 347.9,411.9 347.1,413.1 347.1,414.0 347.7,414.5 348.7,414.4 350.2,413.8 351.7,412.8 353.3,411.5 354.7,410.0 355.7,408.5 356.1,407.4 355.7,406.9 354.7,407.0 353.0,407.7 350.8,409.1 348.8,410.7 347.6,412.1 346.8,413.3 346.8,414.3 347.4,414.7 348.5,414.7 350.1,414.0 351.7,413.0 353.4,411.6 354.9,410.0 356.0,408.4 356.4,407.2 356.0,406.6 354.9,406.7 353.0,407.5 350.7,409.0 348.6,410.7 347.3,412.2 346.5,413.5 346.4,414.5 347.1,415.0 348.2,415.0 349.9,414.4 351.6,413.3 353.4,411.8 355.1,410.0 356.2,408.3 356.7,407.0 356.6,406.5 356.3,406.3 355.0,406.5 353.0,407.4 350.5,409.0 348.3,410.9 346.9,412.4 346.1,413.8 346.0,414.8 346.8,415.4 347.9,415.3 349.4,414.8 351.0,413.9 352.7,412.6 354.4,411.1 355.8,409.4 356.8,407.8 357.1,406.7"/>
<polyline fill="none" stroke="#404588" points="356.2,432.1 356.9,429.4 358.5,425.6 368.3,408.7 371.8,401.5 372.9,398.3 373.4,395.7 373.2,393.8 372.6,393.0 371.7,392.7 369.8,392.8 367.3,393.7 364.3,395.3 334.7,413.9 330.6,416.7 327.7,419.0 325.4,421.4 321.8,425.8 319.7,427.9 317.0,429.5 314.0,430.5 311.6,430.7 309.4,430.5 307.0,429.9 305.0,429.1 303.0,427.8 301.1,426.2 299.3,424.2 298.1,422.4 296.9,419.8 296.3,417.7 296.0,415.5 296.1,413.4 296.4,411.4 297.1,409.6 298.1,408.1 299.9,406.5 302.0,405.6 304.9,405.2 308.0,405.6 311.0,406.6 314.2,408.3 317.3,410.7 319.8,413.2 321.7,416.1 322.9,418.8 323.5,421.5 323.4,424.1 322.6,426.6 321.2,428.8 319.3,430.6 317.0,431.8 314.0,432.6 311.8,432.8 309.3,432.6 306.6,431.9 304.3,431.0 302.0,429.6 300.2,428.2 298.1,425.8 296.7,423.8 295.2,420.7 294.4,418.1 294.0,415.5 294.0,412.9 294.4,410.5 295.2,408.3 296.4,406.4 298.0,405.0 300.5,403.7 303.2,403.1 306.9,403.4 310.4,404.4 314.3,406.4 318.1,409.0 321.5,412.3 323.8,415.3 325.4,418.5 326.2,421.7 326.4,425.0 325.8,428.0 324.6,430.6 322.7,432.8 320.2,434.6 317.0,435.9 314.3,436.4 311.1,436.5 308.1,436.1 304.7,435.1 301.8,433.6 298.9,431.5 296.1,428.7 294.2,426.2 292.6,423.2 291.4,419.9 290.6,416.5 290.4,413.0 290.7,409.6 291.7,406.6 293.2,404.0 295.2,401.9 296.7,400.9 299.2,399.9 301.9,399.5 304.8,399.7 307.6,400.2 310.3,401.1 313.7,402.6 316.8,404.4 319.5,406.2 322.4,408.6 325.1,411.3 327.2,413.8 329.9,418.1 333.1,425.7 334.3,427.7 335.2,428.5 336.2,429.0 337.3,429.3 338.7,429.4 340.4,429.1 342.5,428.4 347.0,426.0 352.3,422.1 357.2,417.5 362.2,411.7 366.2,406.0 367.8,403.3 369.0,400.6 369.8,398.4 370.0,397.1 370.0,396.1 369.7,395.3 368.7,394.8 367.2,394.9 364.4,395.9 360.9,397.8 357.1,400.1 338.5,412.3 333.6,416.0 330.5,419.0 328.4,422.0 324.9,428.4 322.7,431.1 321.1,432.5 319.5,433.5 317.4,434.3 315.4,434.9 313.1,435.2 311.0,435.2 308.7,434.9 306.2,434.2 304.2,433.5 302.2,432.4 300.2,431.0 298.2,429.2 296.3,427.1 295.2,425.5 293.7,422.8 292.9,420.8 292.1,417.7 291.7,415.6 291.8,411.4 292.1,409.5 292.7,407.6 293.6,406.0 294.6,404.5 295.8,403.3 297.2,402.3 298.7,401.6 301.1,401.0 302.8,400.8 305.3,401.0 309.6,402.0 314.3,404.1 317.0,405.8 319.5,407.6"/>
<polyline fill="none" stroke="#3c4f8a" points="303.4,432.5 306.1,436.2 308.1,439.6 308.6,441.3 308.5,442.1 308.2,442.8 307.6,443.2 306.3,443.6 304.5,443.5 303.1,443.3 299.8,442.1 296.1,439.9 293.1,437.5 291.1,435.4 289.2,433.0 287.4,430.3 285.8,427.2 284.5,423.8 283.0,418.3 282.5,412.5 282.7,408.7 283.3,405.1 284.4,401.8 286.0,398.9 286.9,397.6 289.0,395.4 291.4,393.8 292.6,393.2 295.3,392.3 299.6,391.9 302.5,392.1 305.3,392.7 310.8,394.4 315.8,396.8 321.3,399.9 326.6,403.5 332.9,408.5 340.7,415.6 342.4,416.7 343.9,417.3 346.1,417.3 348.3,416.7 351.0,415.2 353.6,413.2 356.4,410.5 358.6,407.5 359.6,405.1 359.6,404.4 359.2,403.9 358.6,403.8 357.4,404.0 354.1,405.5 349.6,408.4 345.7,411.7 343.5,414.1 342.6,416.1 342.5,417.0 342.8,417.8 343.3,418.3 344.1,418.5 346.3,418.4 348.9,417.3 351.8,415.4 354.6,413.0 357.5,409.8 359.5,407.0 360.4,404.6 360.3,403.8 359.9,403.3 359.2,403.2 357.8,403.4 354.1,405.2 348.9,408.7 344.7,412.2 342.6,414.7 341.9,415.9 341.6,416.9 341.6,417.8 342.0,418.7 342.6,419.2 343.5,419.4 345.8,419.2 348.7,418.0 351.8,416.0 354.8,413.4 358.1,409.8 360.3,406.6 360.9,405.1 361.3,403.9 361.2,403.0 360.9,402.6 360.1,402.4 358.6,402.7 354.5,404.6 348.7,408.5 343.8,412.5 341.5,415.2 340.8,416.5 340.5,417.6 340.5,418.7 340.9,419.6 341.7,420.2 342.6,420.5 343.9,420.5 345.1,420.3 348.2,419.1 351.6,416.9 355.3,413.6 358.5,410.1 361.1,406.3 361.9,404.7 362.3,403.3 362.3,402.2 362.0,401.7 361.1,401.5 359.5,401.8 357.3,402.7 354.8,404.1 347.8,408.7 344.5,411.3 342.3,413.3 340.9,414.9 339.9,416.3 339.3,417.6 339.0,419.0 339.2,420.1 339.7,421.0 340.6,421.7 341.8,422.0 343.2,422.0 344.8,421.6 348.3,420.0 352.1,417.4 355.9,414.0 359.5,409.9 362.4,405.6 363.3,403.7 363.7,402.1 363.6,401.0 363.1,400.5 361.7,400.4 359.5,401.1 356.3,402.7 352.7,404.9 348.1,408.0 343.8,411.2 340.9,413.7 339.0,415.9 337.7,418.1 337.2,420.1 337.3,421.8 338.2,423.2 339.5,423.9 341.4,424.1 343.8,423.7 346.3,422.6"/>
<polyline fill="none" stroke="#38598c" points="302.4,465.9 300.5,466.7 298.1,467.0 295.2,466.7 293.6,466.4 290.0,465.2 288.1,464.4 284.0,462.0 281.8,460.4 277.4,456.5 272.9,451.4 270.7,448.3 268.6,444.9 266.6,441.1 264.7,437.0 263.1,432.6 261.6,427.9 260.5,423.0 259.6,417.8 259.1,412.6 259.0,407.3 259.2,402.1 259.9,397.0 260.9,392.1 262.3,387.6 264.1,383.4 266.1,379.6 268.5,376.4 271.2,373.6 274.0,371.4 277.1,369.7 280.2,368.5 283.5,367.8 286.8,367.5 290.1,367.6 293.4,368.0 300.0,369.6 303.1,370.7 309.2,373.2 314.9,375.9 331.6,384.5 340.6,388.5 347.5,390.8 355.6,392.4 357.0,392.9 357.4,393.4 357.3,394.1 355.7,396.2 351.9,399.8 339.5,411.1 336.5,414.3 334.4,417.3 333.4,419.5 332.9,421.5 332.6,423.8 332.8,425.8 333.2,427.7 334.0,429.0 335.0,430.0 336.4,430.5 338.1,430.6 340.4,430.1 343.1,429.1 345.9,427.6 348.6,425.7 351.7,423.3 357.5,417.9 360.5,414.5 363.6,410.7 366.3,406.7 368.2,403.7 370.0,399.9 370.8,397.5 371.0,395.6 370.5,394.4 369.4,393.9 367.7,394.1 365.5,395.0 362.8,396.3 356.7,400.1 336.7,413.1 332.4,416.3 329.5,419.0 327.4,421.7 323.6,427.5 321.4,430.0 319.6,431.3 317.8,432.2 316.0,432.9 314.0,433.3 311.7,433.4 309.1,433.2 306.3,432.5 303.9,431.4 301.4,429.9 299.7,428.4 297.5,425.9 296.0,423.7 294.8,421.3 293.9,418.6 293.4,415.9 293.4,413.1 293.7,410.5 294.6,408.2 295.8,406.2 297.4,404.6 299.9,403.2 301.4,402.8 303.6,402.5 307.4,402.9 311.8,404.5 316.3,407.0 319.9,409.9 322.9,413.1 325.4,416.9 326.8,420.6 327.4,424.3 327.1,427.7 326.6,429.5 325.9,431.0 324.0,433.5 321.3,435.7 317.8,437.1 314.1,437.8 311.3,437.9 308.0,437.5 305.2,436.7 302.1,435.3 299.0,433.3 296.7,431.3 294.5,428.8 292.5,425.8 290.9,422.4 289.8,418.7 289.1,414.9 289.1,412.3 289.5,408.7 290.2,406.4 291.1,404.3 293.0,401.8 294.6,400.4 297.2,399.0 299.1,398.5 302.1,398.2 305.2,398.4 308.2,399.1 311.1,400.2 313.8,401.4 317.2,403.3 320.8,405.8 323.8,408.2 326.6,411.0 330.2,415.4 334.5,422.9 336.1,424.9 337.9,426.0 340.2,426.2 342.0,426.0 344.2,425.2 348.6,422.8 353.0,419.5 357.9,414.7 362.2,409.6 365.7,404.2 367.0,401.4 367.5,399.6 367.5,398.3 367.1,397.4 366.2,397.0 364.4,397.2 361.8,398.2 358.0,400.3 351.5,404.4 343.4,409.8 338.6,413.4 335.6,416.1 334.0,417.9 332.9,419.5 332.0,421.3 331.4,423.0 330.6,427.5 330.4,434.5"/>
<polyline fill="none" stroke="#33628d" points="363.0,429.5 363.2,426.1 364.3,421.5 366.0,416.7 370.3,406.0 371.9,400.8 372.3,398.2 372.1,396.3 371.3,395.2 370.4,394.8 369.3,394.8 367.1,395.3 364.5,396.4 361.5,398.0 354.1,402.5 336.0,414.1 332.0,417.1 329.4,419.8 327.6,422.2 324.2,427.7 321.8,430.4 320.1,431.7 318.3,432.6 316.1,433.4 314.1,433.8 311.7,434.0 309.0,433.7 306.1,433.0 303.6,431.9 301.1,430.3 299.3,428.7 297.0,426.1 295.5,423.8 294.3,421.2 293.4,418.4 292.9,415.6 292.9,412.7 293.3,410.0 294.2,407.6 295.5,405.5 297.2,403.9 298.5,403.1 299.9,402.5 301.4,402.2 303.8,402.0 307.7,402.5 312.2,404.2 316.8,406.9 320.9,410.2 324.2,413.9 326.4,417.6 327.8,421.5 328.3,425.5 327.8,429.4 327.3,431.2 326.6,432.7 325.6,434.2 324.4,435.4 321.5,437.4 317.9,438.8 313.9,439.4 310.2,439.4 306.6,438.7 303.4,437.6 300.1,435.9 297.6,434.0 295.1,431.7 292.7,428.8 290.7,425.4 289.1,421.5 288.0,417.3 287.6,413.1 287.7,410.3 288.5,406.3 289.5,404.0 290.7,401.9 293.1,399.4 294.9,398.2 296.9,397.4 299.0,396.9 302.3,396.7 304.5,396.9 307.8,397.7 311.0,398.8 314.0,400.1 319.3,403.2 324.8,407.3 327.9,410.2 330.5,413.1 335.7,420.3 336.9,421.8 338.9,423.2 341.2,423.6 342.9,423.5 344.5,423.0 348.5,421.1 352.8,417.9 357.1,413.9 361.2,409.0 364.0,404.6 365.0,402.4 365.3,401.0 365.2,399.7 364.7,399.1 363.4,398.9 361.0,399.6 358.0,401.1 354.6,403.1 349.2,406.7 343.9,410.4 340.3,413.3 337.8,415.7 336.3,417.7 335.3,419.6 334.8,421.7 334.8,423.4 335.3,425.1 336.3,426.4 337.7,427.1 339.5,427.3 341.4,427.0 343.5,426.3 348.0,423.9 353.0,420.1 357.5,415.8 362.0,410.4 365.9,404.7 367.4,401.6 368.1,399.6 368.3,398.0 368.1,396.9 367.3,396.3 365.4,396.4 363.5,397.1 360.5,398.6 355.4,401.7 347.0,407.2 340.8,411.4 336.9,414.4 333.5,417.6 331.3,420.6 330.0,423.6 327.8,430.9 326.9,432.8 325.8,434.4 324.1,436.1 321.9,437.5 319.2,438.7 316.6,439.4 313.9,439.7 310.9,439.7 308.1,439.4 305.8,438.8 303.3,437.9 300.8,436.6 298.2,434.9 295.7,432.7 293.3,429.9 291.8,427.8 290.4,425.4 289.3,422.8 288.4,420.1 287.7,417.2 287.4,414.3 287.3,411.4"/>
<polyline fill="none" stroke="#2f6b8e" points="356.8,431.3 355.3,429.8 354.5,428.2 354.2,426.6 354.5,424.4 355.1,422.6 356.3,420.2 362.8,409.7 365.4,404.7 366.3,402.2 366.5,400.7 366.3,399.2 365.6,398.6 364.6,398.5 363.1,398.7 359.4,400.3 353.6,403.7 345.4,409.2 340.7,412.7 337.4,415.6 335.4,418.1 334.1,420.9 333.6,423.7 334.0,426.2 334.5,427.2 335.2,428.1 336.1,428.6 337.1,429.0 339.4,429.0 342.3,428.2 345.7,426.6 349.4,424.1 353.8,420.6 358.0,416.4 361.5,412.3 364.9,407.7 367.7,403.2 369.4,399.1 369.8,397.2 369.7,396.2 369.4,395.5 368.8,395.1 367.5,395.0 365.6,395.5 360.7,398.0 347.5,406.4 336.5,413.9 332.8,416.9 330.2,419.8 328.5,422.5 325.4,428.6 323.1,431.5 321.5,432.8 319.6,434.0 317.5,434.9 315.0,435.5 312.6,435.7 309.8,435.6 307.3,435.1 304.7,434.2 302.6,433.2 300.5,431.9 298.4,430.2 296.5,428.1 294.7,425.6 293.7,423.7 292.4,420.7 291.7,418.6 291.2,415.3 291.1,413.1 291.5,409.9 292.0,407.9 293.3,405.3 295.0,403.2 297.1,401.7 298.7,401.0 300.3,400.5 303.0,400.3 306.5,400.7 310.0,401.7 313.3,403.1 317.0,405.2 320.6,408.0 324.0,411.1 326.4,414.0 328.1,416.6 329.4,419.3 330.5,422.2 332.2,428.2 332.8,429.6 333.5,430.6 334.4,431.4 335.6,431.9 336.9,432.0 338.4,431.8 340.6,431.2 343.4,429.9 346.4,428.2 349.4,426.1 352.7,423.3 355.7,420.6 361.3,414.5 364.5,410.4 366.7,407.1 369.3,402.8 370.8,399.7 371.7,397.1 372.0,395.0 371.6,393.6 370.5,393.0 369.4,393.0 367.2,393.7 362.5,396.1 334.1,414.4 330.5,417.1 327.9,419.4 326.1,421.5 322.6,426.3 320.6,428.4 317.7,430.3 316.1,430.9 314.3,431.4 312.3,431.7 310.0,431.6 307.5,431.1 305.3,430.3 303.2,429.1 301.1,427.5 299.1,425.4 297.8,423.6 296.3,420.8 295.6,418.5 295.1,416.1 295.0,413.8 295.3,411.5 296.0,409.5 297.0,407.7 298.8,405.9 301.1,404.7 303.6,404.2 306.9,404.4 310.2,405.4 313.8,407.1 316.9,409.3 319.8,411.9 321.9,414.5 323.5,417.4 324.4,420.0 324.8,423.0 324.5,425.7 323.7,428.1 322.1,430.3 320.1,432.0 317.4,433.4 314.2,434.2 310.8,434.4 307.4,433.8 303.6,432.3 300.4,430.2 297.9,427.9 295.7,424.9 294.0,421.5"/>
<polyline fill="none" stroke="#2c738e" points="326.1,456.3 322.8,456.1 314.2,456.5 309.4,456.3 304.7,455.6 299.2,454.0 294.7,451.9 289.9,448.7 286.6,445.9 285.0,444.3 281.8,440.4 278.9,435.9 277.5,433.4 275.1,427.8 273.3,421.7 272.1,415.2 271.8,408.6 272.4,402.1 273.0,399.0 273.8,396.1 274.8,393.4 276.1,390.9 277.5,388.6 279.1,386.6 280.9,384.9 282.8,383.5 284.8,382.3 286.8,381.4 289.0,380.7 291.2,380.3 295.7,380.2 300.2,380.8 304.7,381.9 311.0,384.2 316.8,387.0 337.5,398.3 347.6,403.5 349.5,404.7 350.6,405.8 350.7,406.8 350.2,408.1 347.6,412.2 347.4,413.3 347.8,413.9 348.7,414.0 349.9,413.6 352.7,411.8 354.1,410.3 355.1,409.1 355.5,408.0 355.3,407.4 354.5,407.4 353.0,407.9 349.7,410.2 348.4,411.5 347.6,412.7 347.3,413.5 347.6,414.1 348.5,414.2 349.7,413.8 351.3,413.0 352.8,411.8 354.2,410.4 355.2,409.0 355.7,407.9 355.6,407.2 354.8,407.1 353.2,407.7 351.4,408.8 349.5,410.3 348.1,411.6 347.3,412.8 347.0,413.8 347.4,414.4 348.3,414.5 349.6,414.1 351.3,413.1 352.9,411.9 354.4,410.4 355.5,408.9 356.0,407.7 355.8,407.0 354.9,406.9 353.3,407.5 351.3,408.7 349.3,410.3 347.8,411.8 347.0,413.0 346.7,414.0 347.1,414.6 348.2,414.7 349.6,414.3 351.2,413.4 352.9,412.0 354.5,410.5 355.7,408.8 356.3,407.5 356.1,406.7 355.2,406.6 353.4,407.3 351.3,408.6 349.1,410.3 347.6,411.8 346.6,413.2 346.4,414.3 346.8,415.0 348.0,415.0 349.6,414.5 351.3,413.5 353.1,412.1 354.8,410.4 356.1,408.6 356.7,407.2 356.5,406.5 356.0,406.3 355.1,406.4 352.7,407.6 349.8,409.6 347.3,411.9 346.1,413.7 346.0,414.4 346.1,415.0 346.6,415.3 347.2,415.4 349.3,414.9"/>
<polyline fill="none" stroke="#297b8e" points="314.9,468.3 312.4,468.8 309.2,469.0 303.8,468.7 298.9,467.8 293.2,466.0 289.0,464.0 284.5,461.2 279.9,457.5 275.2,452.6 272.9,449.6 270.7,446.4 268.6,442.8 266.6,438.9 264.8,434.6 263.2,430.1 261.8,425.3 260.8,420.3 260.0,415.1 259.7,409.9 259.7,404.6 260.0,399.5 260.8,394.5 262.0,389.7 263.5,385.3 265.4,381.4 267.6,377.8 270.1,374.8 272.8,372.3 275.7,370.3 278.8,368.9 282.0,367.9 285.2,367.3 288.5,367.2 291.9,367.4 295.1,368.0 301.6,369.7 304.7,370.8 310.7,373.4 330.6,383.5 338.2,387.0 345.7,389.8 350.2,391.0 355.4,392.1 357.0,392.7 357.2,393.3 357.0,394.1 355.3,396.3 351.3,400.2 339.4,411.0 336.4,414.2 334.3,417.3 333.3,419.5 332.7,421.5 332.4,423.6 332.5,425.8 332.8,427.8 333.6,429.3 334.5,430.3 335.7,431.0 337.5,431.2 339.7,430.8 342.2,429.9 345.3,428.3 348.0,426.5 351.1,424.2 354.6,421.1 357.6,418.1 360.8,414.6 363.9,410.7 366.7,406.5 369.1,402.4 370.8,398.7 371.3,396.4 371.3,394.7 370.6,393.7 369.7,393.5 367.9,393.8 365.6,394.7 362.8,396.2 357.6,399.4 335.6,413.7 331.8,416.5 328.9,419.1 326.9,421.6 323.1,427.1 321.0,429.4 319.5,430.5 317.7,431.4 316.0,432.1 314.1,432.5 311.9,432.7 309.4,432.5 306.7,431.9 304.4,430.9 302.1,429.5 300.4,428.2 298.3,425.9 296.9,423.9 295.3,420.8 294.5,418.3 294.1,415.7 294.1,413.1 294.5,410.7 295.3,408.5 296.4,406.6 297.9,405.1 300.4,403.8 301.7,403.4 303.8,403.2 307.4,403.6 311.6,405.0 315.9,407.5 319.3,410.2 322.3,413.4 324.4,416.7 325.7,420.1 326.3,423.4 326.0,426.5 325.0,429.5 323.2,432.0 320.7,434.0 317.7,435.4 314.2,436.2 311.1,436.3 308.0,435.9 305.3,435.1 302.5,433.8 299.7,431.9 297.5,430.0 295.6,427.7 293.8,425.0 292.3,422.0 291.3,418.7 290.7,415.3 290.7,411.9 291.2,408.6 291.9,406.7 293.4,404.1 295.3,402.1 296.8,401.1 299.3,400.2 302.0,399.8 304.8,399.9 307.5,400.4 310.2,401.3 313.6,402.8 316.6,404.5 319.9,406.8 322.7,409.1 325.3,411.8 327.3,414.2 329.8,418.5 332.8,426.2 334.1,428.4 334.9,429.2 336.0,429.7 337.1,430.0 338.5,430.0 340.5,429.6 342.7,428.8 345.4,427.4 348.0,425.8 353.7,421.3 358.8,416.2 363.9,409.8 366.6,405.9 368.2,403.0 369.5,400.3 370.3,398.0 370.6,396.1 370.2,394.9 369.1,394.3 367.5,394.4 365.4,395.2 362.8,396.5 354.9,401.3 335.7,414.0 331.9,417.1 329.4,419.7 327.7,422.1 324.6,427.4 322.7,429.8 320.2,431.9 317.0,433.4"/>
<polyline fill="none" stroke="#25838e" points="308.7,445.8 305.1,445.1 301.0,443.6 297.8,441.9 294.4,439.6 291.0,436.4 288.9,433.8 286.0,429.3 284.3,425.8 282.4,420.0 281.7,415.9 281.4,411.7 281.6,407.6 282.3,403.7 283.6,400.2 285.3,397.2 286.3,395.8 288.6,393.6 289.8,392.7 292.6,391.4 295.5,390.6 298.5,390.3 301.6,390.5 304.6,391.0 310.5,392.9 317.1,396.0 324.8,400.5 332.4,406.1 342.0,414.1 343.8,415.1 345.3,415.6 347.0,415.6 349.0,415.1 351.0,414.1 353.4,412.4 355.6,410.2 357.3,408.0 358.0,406.2 357.9,405.5 357.5,405.3 356.8,405.2 355.8,405.5 353.1,406.8 349.9,408.9 347.0,411.4 345.4,413.2 344.5,414.9 344.5,415.6 344.7,416.2 345.1,416.6 345.7,416.7 347.3,416.6 349.5,415.7 351.8,414.2 354.0,412.3 356.3,409.9 357.9,407.5 358.5,405.8 358.4,405.2 358.1,404.9 357.5,404.8 356.5,405.0 353.7,406.3 349.9,408.7 346.7,411.3 344.8,413.5 343.9,415.3 343.9,416.1 344.1,416.7 344.6,417.1 345.2,417.3 346.9,417.1 349.2,416.2 351.6,414.7 354.3,412.5 356.7,409.8 358.5,407.1 359.1,405.3 359.0,404.7 358.6,404.4 357.9,404.3 356.7,404.6 353.6,406.1 349.5,408.8 346.1,411.6 344.1,413.9 343.2,415.7 343.2,416.6 343.4,417.2 343.9,417.7 344.7,417.9 346.5,417.7 349.0,416.8 351.7,415.1 354.5,412.6 357.2,409.7 359.0,407.1 359.7,405.0 359.7,404.3 359.3,403.8 358.6,403.7 357.3,404.0 353.9,405.6 349.4,408.6 345.5,411.8 343.4,414.3 342.5,416.2 342.4,417.1 342.7,417.9 343.3,418.4 344.1,418.6 346.3,418.4 349.0,417.3 351.9,415.4 354.7,413.0 357.6,409.7 359.6,406.8 360.5,404.4 360.4,403.7 360.0,403.2 359.2,403.1 357.8,403.4 354.0,405.3 348.7,408.8 344.5,412.3 342.4,414.8 341.8,416.0 341.5,417.1 341.5,418.0 341.9,418.8 342.5,419.3 343.4,419.5 344.6,419.5 346.0,419.2 349.4,417.7 353.0,415.1 356.4,411.8 359.4,408.1 360.6,406.1 361.2,404.7 361.4,403.3 361.1,402.6 360.4,402.3 359.3,402.4"/>
<polyline fill="none" stroke="#228c8d" points="340.9,467.5 338.1,464.5 336.8,462.7 336.0,461.1 335.6,459.7 335.5,458.4 335.7,457.2 336.4,455.7 337.5,454.2 339.4,452.0 351.3,440.7 358.7,432.9 366.1,424.0 372.6,415.1 377.4,407.5 380.5,402.1 383.4,396.7 385.8,391.4 387.7,386.5 388.8,382.3 389.2,379.0 389.0,377.8 388.6,376.9 387.9,376.3 387.0,376.0 385.9,376.1 384.6,376.5 381.3,378.1 375.0,382.4 360.2,393.9 350.3,401.1 341.3,406.6 337.3,408.7 331.9,411.1 327.1,412.7 323.0,413.7 319.5,414.1 315.7,414.2 312.2,413.7 309.4,412.6 308.3,411.9 307.8,411.1 307.7,410.5 308.0,410.0 308.8,409.8 310.1,410.0 311.6,410.7 313.1,411.7 315.5,414.2 316.4,415.6 317.1,417.2 317.6,419.8 317.5,421.2 317.1,422.5 316.4,423.6 315.7,424.5 314.6,425.3 313.5,425.8 311.9,426.2 310.5,426.3 308.9,426.1 307.2,425.6 305.6,424.8 304.3,423.9 303.1,422.7 302.0,421.3 301.2,419.8 300.6,418.1 300.3,416.4 300.3,415.1 300.5,413.5 301.0,412.4 301.8,411.2 302.9,410.3 304.3,409.7 306.1,409.4 307.7,409.5 309.6,410.0 311.4,410.9 313.4,412.2 315.1,413.7 316.4,415.3 317.3,416.9 318.0,418.8 318.2,420.3 318.0,422.0 317.5,423.5 316.6,424.8 315.3,425.9 313.9,426.6 312.2,427.0 310.7,427.1 309.0,426.9 307.2,426.4 304.3,424.8 302.9,423.6 301.7,422.2 300.7,420.5 300.0,418.7 299.5,416.8 299.4,415.3 299.7,413.5 300.1,412.3 301.0,410.8 302.1,409.7 303.6,409.0 305.6,408.6 307.3,408.7 309.4,409.2 311.5,410.1 313.7,411.5 315.5,413.1 317.2,415.1 318.2,416.9 318.9,418.8 319.1,420.7 318.9,422.7 318.3,424.2 317.3,425.6 315.9,426.8 314.1,427.6 312.3,428.0 310.6,428.1 308.7,427.8 306.7,427.2 305.1,426.4 303.6,425.4 302.1,424.0 300.8,422.3 299.7,420.4 298.9,418.3 298.5,416.1 298.5,414.5 298.9,412.5 299.4,411.2 300.2,410.0 301.6,408.8 303.2,408.0 305.5,407.7 307.9,407.9 310.2,408.6 312.4,409.7 314.7,411.3 316.6,413.1 318.3,415.3 319.5,417.4 320.1,419.5 320.3,421.4 320.0,423.5 319.2,425.3 318.0,426.7 316.5,427.9 314.6,428.8 312.6,429.2 310.8,429.3 308.7,429.0 306.5,428.4 304.7,427.5 303.0,426.3 301.3,424.7 299.8,422.8 298.6,420.6 297.9,418.9 297.4,416.4 297.3,414.5 297.7,412.2 298.3,410.6 299.1,409.3 300.6,407.9 302.4,407.0 305.0,406.5 307.2,406.7 309.8,407.4 312.3,408.5 315.0,410.3 317.2,412.2 319.2,414.6 320.6,416.9 321.4,419.1 321.7,421.4 321.6,423.6 320.9,425.6 319.8,427.3 318.1,428.8 316.2,429.9 314.6,430.5 312.7,430.8 309.3,430.7 305.9,429.7 302.9,428.0 300.0,425.3 298.7,423.7 297.6,421.8 296.3,418.4 295.8,414.7 296.3,411.3 297.3,408.9 298.0,407.9 299.3,406.7 300.3,406.0 302.0,405.4 305.0,405.0 306.9,405.2 308.7,405.6 312.8,407.3 316.3,409.6"/>
<polyline fill="none" stroke="#1f948c" points="329.0,462.3 326.0,461.4 322.1,460.7 310.7,459.6 306.9,459.1 302.6,458.1 299.6,457.1 294.6,455.0 289.3,451.7 285.7,448.8 282.1,445.1 278.7,440.5 275.5,435.2 272.8,429.1 270.8,422.2 269.5,415.0 269.2,411.3 269.2,407.6 269.4,403.9 269.8,400.3 270.5,396.9 271.5,393.7 272.7,390.7 274.2,388.0 275.8,385.5 277.6,383.4 279.6,381.6 281.8,380.1 284.0,378.9 286.4,378.1 288.8,377.5 291.2,377.2 296.2,377.4 298.7,377.7 303.5,378.9 308.2,380.6 314.8,383.5 336.1,394.7 342.3,397.7 349.6,400.9 351.4,402.0 351.8,402.5 352.0,403.2 351.4,404.7 346.3,410.9 344.7,413.6 344.4,414.5 344.3,415.5 344.6,416.1 345.1,416.5 346.6,416.7 348.6,416.1 350.8,414.9 353.3,413.0 355.6,410.7 357.5,408.2 358.5,406.1 358.5,405.4 358.3,405.0 357.8,404.8 356.9,404.9 354.2,406.0 350.7,408.1 347.4,410.8 345.4,412.8 344.1,414.7 343.9,416.2 344.2,416.8 344.6,417.1 346.2,417.3 348.5,416.6 350.9,415.2 353.5,413.2 356.0,410.6 358.0,407.9 359.0,405.8 359.1,405.1 358.9,404.6 358.4,404.3 357.4,404.4 354.5,405.6 350.7,407.9 347.1,410.7 344.9,412.9 343.5,415.0 343.2,415.9 343.2,416.7 343.5,417.3 344.1,417.7 345.8,417.9 348.3,417.1 350.9,415.6 353.7,413.4 356.5,410.6 358.7,407.6 359.7,405.3 359.7,404.5 359.5,404.0 358.9,403.8 357.7,403.9 354.5,405.3 350.0,408.1 346.2,411.2 344.0,413.5 342.7,415.6 342.4,416.6 342.5,417.4 342.8,418.0 343.4,418.4 344.3,418.6 345.5,418.6 348.0,417.8 350.7,416.2 353.8,413.8 356.8,410.7 359.3,407.4 360.4,404.9 360.5,404.0 360.2,403.4 359.5,403.1 358.3,403.3 354.6,404.9 349.7,408.1 345.3,411.6 342.8,414.3 341.6,416.4 341.5,417.4 341.6,418.2 342.0,418.9 342.7,419.3 343.7,419.5 344.9,419.5 347.6,418.6 350.6,416.9 353.9,414.3 357.3,410.8 359.8,407.5 361.2,404.6 361.4,403.5 361.1,402.7 360.5,402.4 359.5,402.4 356.1,403.8 350.6,407.1 345.4,411.0 342.6,413.7 340.9,416.2 340.4,417.4 340.3,418.4 340.5,419.3 341.0,419.9"/>
<polyline fill="none" stroke="#1e9d89" points="347.3,456.5 350.9,451.6 363.4,436.0 370.8,426.0 378.9,413.7 384.9,403.2 390.4,392.3 393.4,385.2 394.6,381.9 396.3,376.0 396.7,373.5 396.8,371.4 396.6,369.8 396.0,368.6 395.1,368.0 393.8,367.9 392.2,368.2 390.3,369.1 388.1,370.4 385.7,372.1 380.1,376.6 360.7,392.9 351.1,400.2 345.1,404.2 339.5,407.5 334.3,410.0 329.6,411.8 325.3,413.0 319.7,413.9 315.0,413.9 312.3,413.5 309.9,412.8 307.9,411.9 306.2,410.9 304.9,409.8 303.4,408.0 302.6,406.1 302.3,404.5 302.7,403.0 303.4,401.9 304.2,401.3 305.5,400.8 308.3,400.7 310.1,401.0 312.0,401.7 315.6,403.5 319.3,406.2 322.4,409.2 325.0,412.5 327.1,416.2 328.4,419.9 329.2,423.8 329.3,428.2 328.7,432.0 327.7,434.7 326.1,436.8 323.9,438.7 321.0,440.1 318.3,441.0 315.2,441.5 312.2,441.7 308.6,441.4 305.3,440.6 302.7,439.7 300.0,438.3 297.1,436.4 294.3,433.9 292.6,431.9 290.1,428.4 288.6,425.7 286.9,421.2 286.1,418.0 285.6,414.8 285.5,411.5 286.1,406.8 286.9,404.0 288.2,401.4 288.9,400.3 290.6,398.3 292.6,396.7 295.9,395.2 299.6,394.6 303.3,394.7 307.0,395.5 311.8,397.1 316.1,399.2 319.9,401.5 324.7,404.9 329.5,408.9 332.5,411.9 337.4,417.6 339.2,419.2 340.4,420.0 341.5,420.4 342.6,420.6 344.0,420.5 346.8,419.8 350.1,418.0 353.4,415.5 356.9,412.1 360.0,408.3 362.1,404.6 362.6,403.2 362.7,402.3 362.3,401.5 361.7,401.3 360.5,401.3 358.5,402.0 352.9,405.1 345.9,410.0 343.3,412.2 341.3,414.2 340.0,415.7 339.1,417.3 338.7,418.8 338.7,420.2 339.2,421.3 340.2,422.1 341.4,422.4 343.0,422.4 344.7,422.0 346.4,421.3 350.0,419.3 353.7,416.4 357.6,412.5 361.1,408.0 363.4,404.2 364.0,402.4 364.2,401.3 363.8,400.3 363.2,400.0 361.9,400.0 359.5,400.9 356.7,402.3 353.0,404.5 344.6,410.4 341.7,412.7 339.3,415.1 337.9,417.0 336.9,418.9 336.6,420.6 336.7,422.2 337.4,423.5 338.6,424.5 340.1,424.8 341.9,424.7 343.7,424.3 345.5,423.5 350.0,420.9 354.3,417.4 358.8,412.7 363.0,407.2 365.6,402.6 366.2,400.5 366.3,399.3 365.9,398.5 365.1,398.1 362.9,398.4 359.8,399.8 355.5,402.3 348.9,406.5 343.3,410.5 339.5,413.4 336.8,416.0 334.9,418.5 334.1,420.0 333.5,421.7 333.2,423.2 333.2,424.9 333.5,426.5 334.0,427.7 334.7,428.7 335.8,429.4 336.8,429.7 338.1,429.8 340.9,429.3 344.5,427.8 348.6,425.3"/>
<polyline fill="none" stroke="#21a585" points="322.5,447.1 325.9,449.9 328.5,451.4 330.4,451.9 332.2,451.4 337.8,447.6 345.0,442.0 351.1,436.7 356.5,431.2 361.5,425.6 367.1,418.8 372.7,410.7 376.8,404.1 380.5,397.3 383.2,391.0 384.8,385.6 385.0,382.9 384.9,381.9 384.5,381.1 384.0,380.6 383.2,380.3 382.3,380.3 379.9,381.0 376.9,382.6 371.4,386.2 356.6,397.1 350.3,401.5 342.7,406.2 334.4,410.4 327.8,413.0 324.5,414.0 320.9,414.8 318.0,415.2 314.7,415.4 311.9,415.2 309.9,414.7 311.4,416.3 312.1,418.1 312.1,419.0 311.8,419.8 311.3,420.4 310.7,420.8 309.5,421.0 308.3,420.7 307.2,420.0 306.3,419.1 305.7,417.9 305.6,416.6 306.0,415.7 306.8,415.0 307.9,414.7 309.2,415.0 310.5,415.7 311.5,416.9 312.1,418.0 312.1,419.3 311.6,420.3 310.7,420.9 309.6,421.2 308.2,420.9 307.1,420.2 306.1,419.1 305.5,417.9 305.4,416.5 305.8,415.5 306.7,414.8 307.8,414.5 309.3,414.8 310.6,415.6 311.7,416.7 312.2,417.9 312.3,419.3 311.9,420.4 310.9,421.1 309.6,421.4 308.2,421.1 307.0,420.4 305.9,419.2 305.3,417.9 305.2,416.6 305.5,415.5 306.4,414.6 307.6,414.3 309.2,414.6 310.6,415.3 311.8,416.6 312.5,417.9 312.6,419.3 312.1,420.5 311.0,421.3 309.7,421.6 308.2,421.3 306.9,420.6 305.8,419.4 305.1,417.9 305.0,416.4 305.4,415.3 306.4,414.4 307.7,414.1 309.4,414.4 310.9,415.3 312.1,416.7 312.7,418.1 312.8,419.5 312.2,420.8 311.1,421.6 309.7,421.8 308.1,421.5 306.7,420.7 305.5,419.4 304.8,417.8 304.7,416.4 305.1,415.1 306.2,414.2 307.1,413.9 308.1,413.9 309.2,414.1 310.4,414.7 312.1,416.3 312.7,417.3 313.1,418.3"/>
<polyline fill="none" stroke="#26ad81" points="335.8,434.7 338.9,434.8 341.9,434.4 344.9,433.4 348.0,431.9 352.4,429.0 355.8,426.2 359.5,422.7 363.3,418.6 367.1,414.0 370.9,408.8 374.4,403.3 377.5,397.7 379.8,392.5 381.0,388.2 381.2,386.1 381.0,385.2 380.3,384.1 379.7,383.9 378.0,384.0 375.8,384.8 373.0,386.2 368.2,389.3 355.6,398.3 348.5,403.0 340.6,407.8 332.9,411.7 324.5,415.0 310.5,419.2 308.7,419.1 308.1,418.7 307.6,418.2 307.4,417.5 307.5,416.8 308.0,416.5 308.7,416.4 309.5,416.7 310.1,417.4 310.3,418.1 310.2,418.8 309.8,419.2 309.1,419.4 308.4,419.2 307.7,418.7 307.3,418.0 307.2,417.3 307.4,416.7 308.0,416.4 308.6,416.3 309.2,416.5 310.3,417.6 310.4,418.2 310.3,418.8 310.0,419.2 309.5,419.4 308.2,419.2 307.3,418.2 307.2,417.0 307.4,416.6 307.9,416.3 308.6,416.2 309.3,416.4 310.3,417.5 310.5,418.1 310.5,418.8 310.1,419.3 309.5,419.5 308.2,419.3 307.2,418.3 307.0,417.6 307.1,417.0 307.3,416.5 307.8,416.2 308.5,416.1 309.3,416.4 309.9,416.8 310.4,417.5 310.6,418.2 310.5,418.9 310.1,419.4 309.5,419.7 308.2,419.4 307.2,418.3 306.9,417.6 307.0,416.9 307.2,416.4 307.8,416.1 308.5,416.0 309.3,416.3 310.0,416.8 310.5,417.5 310.8,418.2 310.7,418.9 310.2,419.5 309.6,419.8 308.8,419.7 307.9,419.3 307.2,418.6 306.8,417.8 306.9,416.9 307.2,416.3 307.9,415.9 308.8,416.0"/>
<polyline fill="none" stroke="#31b57b" points="351.8,443.6 349.8,441.8 349.0,440.7 348.5,439.5 348.3,438.3 348.3,437.2 349.0,434.8 351.5,430.9 360.1,420.3 364.6,414.4 368.1,409.1 370.6,405.0 373.3,399.7 375.0,395.1 375.3,393.3 375.3,391.8 374.8,390.8 374.5,390.4 373.4,390.1 371.2,390.6 369.2,391.4 365.8,393.2 345.2,406.6 327.4,417.0 323.8,419.6 317.7,424.9 315.8,426.1 313.9,426.8 312.0,427.1 310.3,427.1 308.5,426.8 307.0,426.4 305.5,425.6 304.1,424.6 302.7,423.4 301.5,421.9 300.5,420.2 299.8,418.3 299.5,416.4 299.4,415.0 299.7,413.2 300.2,411.9 301.1,410.6 302.4,409.5 303.8,408.9 305.9,408.6 308.1,408.8 310.2,409.5 312.5,410.7 314.6,412.2 316.3,413.9 317.7,415.9 318.7,417.9 319.1,419.9 319.1,421.7 318.8,423.3 317.8,425.0 316.6,426.3 315.1,427.3 313.4,427.9 311.4,428.1 309.6,428.1 307.7,427.6 306.1,427.0 304.5,426.1 302.9,424.9 301.5,423.4 300.2,421.6 299.3,419.6 298.8,418.0 298.5,415.8 298.5,414.2 298.9,412.2 299.5,410.9 300.4,409.8 301.8,408.6 303.4,407.9 305.8,407.6 308.2,407.9 310.5,408.7 313.1,410.1 315.3,411.8 317.1,413.6 318.7,415.8 319.7,417.9 320.2,420.0 320.3,421.9 319.9,423.9 319.0,425.7 317.6,427.2 315.9,428.3 313.9,429.1 311.8,429.4 309.8,429.3 307.7,428.8 305.9,428.2 304.1,427.2 302.3,425.8 300.7,424.1 299.3,422.1 298.2,419.8 297.6,418.0 297.3,415.5 297.3,413.7 297.7,411.9 298.3,410.4 299.2,409.0 300.8,407.7 302.6,406.8 305.2,406.4 308.0,406.8 310.6,407.6 313.5,409.2 316.0,411.0 318.3,413.3 320.0,415.7 321.1,418.0 321.7,420.4 321.8,422.7 321.3,425.0 320.1,427.0 318.6,428.6 316.5,429.9 314.2,430.6 311.9,430.9 309.7,430.8 307.3,430.3 305.3,429.5 303.3,428.4 301.3,426.8 299.4,424.8 298.2,423.0 296.9,420.4 296.2,418.3 295.8,416.1 295.7,413.9 296.0,411.8 296.7,409.9 297.6,408.2 299.4,406.5 301.5,405.4 304.5,404.9 307.6,405.2 310.6,406.2 314.0,407.9 317.3,410.4 319.8,412.9 321.9,415.8 323.1,418.5 323.8,421.3 323.8,424.1 323.0,426.7 321.7,429.0 319.8,430.7 317.6,432.0 314.7,432.9 312.0,433.2 309.5,433.1 306.7,432.4 304.4,431.5 302.0,430.1 300.2,428.7 298.0,426.3 296.5,424.2 294.9,421.0 294.1,418.4 293.6,415.7 293.6,413.0 294.0,410.5 294.8,408.2 296.0,406.2 297.6,404.7 299.5,403.6 302.2,402.8 304.5,402.7 307.5,403.1 310.4,404.1 313.1,405.3 316.2,407.2 318.8,409.2 321.0,411.2 323.1,413.6 324.8,416.3 325.9,418.7 326.7,421.3 327.0,423.8 326.9,426.4 326.3,429.0"/>
<polyline fill="none" stroke="#3fbc73" points="356.4,440.5 355.7,438.7 355.4,436.0 355.6,434.2 356.4,431.3 358.9,426.2 368.7,410.0 373.0,401.8 374.4,398.0 375.3,394.8 375.3,392.4 374.9,391.4 374.5,391.0 373.4,390.7 371.2,391.0 368.2,392.3 364.8,394.3 345.6,406.6 327.9,417.1 324.0,420.0 318.1,425.4 316.1,426.6 313.8,427.4 311.9,427.7 310.1,427.7 308.2,427.3 306.6,426.8 305.1,425.9 303.5,424.9 302.1,423.5 300.9,421.8 299.9,420.0 299.2,417.9 298.9,415.9 298.9,414.3 299.3,412.5 299.9,411.2 300.7,410.1 302.0,409.0 303.6,408.3 305.8,408.0 308.1,408.3 310.3,409.0 312.8,410.3 315.0,411.9 316.7,413.7 318.3,415.8 319.3,417.9 319.8,419.9 319.8,421.8 319.4,423.7 318.4,425.5 317.2,426.8 315.6,427.8 313.6,428.6 311.5,428.8 309.6,428.7 307.6,428.3 305.8,427.6 304.1,426.6 302.5,425.3 300.9,423.7 299.9,422.2 298.8,420.1 298.2,418.4 297.8,416.0 297.8,414.3 298.2,412.1 298.8,410.6 299.7,409.4 301.2,408.1 302.9,407.3 305.4,407.0 308.0,407.3 310.5,408.1 313.3,409.5 315.7,411.3 317.9,413.5 319.5,415.8 320.5,418.0 321.1,420.4 321.1,422.6 320.6,424.6 319.6,426.4 318.1,428.0 316.1,429.3 313.9,430.0 311.6,430.2 309.5,430.1 307.2,429.6 305.3,428.8 303.3,427.6 301.5,426.1 299.7,424.2 298.6,422.5 297.4,420.0 296.8,418.0 296.5,415.9 296.4,413.9 296.7,412.0 297.3,410.2 298.3,408.7 299.9,407.1 301.9,406.1 304.7,405.6 307.6,405.9 310.5,406.8 313.7,408.4 316.8,410.7 319.2,413.2 321.1,416.0 322.3,418.6 322.9,421.4 322.8,423.9 322.1,426.2 320.9,428.2 319.0,429.9 316.7,431.2 314.2,431.9 311.7,432.2 309.3,432.0 306.7,431.3 304.5,430.4 302.3,429.0 300.6,427.7 298.6,425.5 297.2,423.6 295.8,420.6 295.0,418.2 294.6,415.8 294.6,413.3 294.9,411.0 295.7,408.9 296.8,407.1 298.2,405.7 300.5,404.4 301.8,404.0 303.8,403.7 307.3,404.1 310.7,405.1 314.4,407.0 318.0,409.6 321.1,412.7 323.4,416.1 324.8,419.2 325.5,422.3 325.4,425.3 324.5,428.2 323.0,430.6 320.7,432.7 318.0,434.2 314.8,435.0 311.8,435.3 309.0,435.0 306.5,434.4 303.9,433.4 301.2,431.8 299.2,430.2 296.6,427.6 294.9,425.1 293.5,422.4 292.4,419.3 291.8,416.2 291.6,413.0 292.0,410.0 292.9,407.2 294.2,404.8 296.1,403.0 298.2,401.7 300.6,401.0 303.2,400.7 305.8,401.0 308.3,401.5 311.6,402.7 314.7,404.3 317.4,406.0 320.3,408.2 322.7,410.4 325.0,413.0 326.9,415.7 328.3,418.2 329.4,421.0 330.1,423.7 330.8,427.3"/>
<polyline fill="none" stroke="#50c46a" points="340.6,436.5 343.5,435.6 346.5,434.3 349.7,432.4 353.0,429.9 356.6,426.8 360.4,423.0 367.0,415.3 371.0,409.9 374.7,404.1 378.0,398.2 379.9,394.4 381.8,389.3 382.3,386.5 382.3,384.4 382.1,383.7 381.6,383.1 381.0,382.8 379.4,382.8 377.1,383.5 374.3,385.0 369.3,388.3 355.9,397.8 348.5,402.9 341.8,406.9 334.6,410.7 327.7,413.5 321.2,415.5 311.4,417.5 309.2,418.4 308.7,418.3 308.4,418.0 308.3,417.6 308.6,417.3 309.0,417.4 309.3,417.8 309.3,418.2 309.0,418.4 308.6,418.3 308.3,417.9 308.3,417.5 308.5,417.3 309.0,417.4 309.3,417.8 309.3,418.2 309.0,418.4 308.6,418.3 308.3,418.0 308.2,417.5 308.5,417.3 309.0,417.4 309.4,417.8 309.4,418.2 309.0,418.5 308.6,418.3 308.2,418.0 308.2,417.5 308.5,417.3 309.0,417.3 309.4,417.8 309.4,418.2 309.1,418.5 308.6,418.4 308.2,418.0 308.2,417.5 308.5,417.2 309.0,417.3 309.4,417.7 309.4,418.3 309.1,418.5 308.3,418.2 308.1,417.8 308.2,417.4"/>
<polyline fill="none" stroke="#63cb5f" points="319.8,429.7 320.6,431.2 321.0,432.7 320.7,433.9 319.8,435.2 318.3,436.3 316.5,437.0 314.4,437.5 311.7,437.7 309.3,437.5 307.3,437.1 305.2,436.5 303.0,435.6 299.2,433.2 296.9,431.2 295.4,429.6 292.8,425.9 291.2,422.6 290.3,420.2 289.7,417.7 289.3,413.9 289.3,411.4 289.7,409.0 290.7,405.7 292.4,402.9 294.5,400.8 296.2,399.7 299.0,398.7 300.9,398.4 303.9,398.5 306.0,398.8 308.9,399.6 311.8,400.6 315.3,402.4 318.4,404.3 321.1,406.3 324.0,408.7 326.7,411.4 330.1,415.8 334.2,423.2 335.7,425.2 337.6,426.3 339.8,426.7 341.5,426.4 343.6,425.8 348.0,423.5 352.9,419.8 357.9,415.0 362.3,409.8 365.9,404.2 367.2,401.3 367.8,399.5 367.9,398.1 367.5,397.1 366.6,396.7 364.7,396.9 362.8,397.6 359.8,399.2 354.8,402.2 347.5,407.0 342.0,410.7 337.9,413.8 334.1,417.4 332.8,419.1 331.7,420.9 330.4,424.5 328.7,433.0 327.8,435.1 326.5,436.9 323.9,439.0 320.3,440.7 316.2,441.7 312.1,442.0 308.4,441.6 304.2,440.6 300.6,438.9 297.8,437.2 294.9,434.8 292.2,431.8 289.7,428.2 287.6,424.0 286.1,419.3 285.5,416.0 285.3,411.0 285.6,407.8 286.9,403.4 288.1,400.9 289.8,398.7 290.7,397.8 292.7,396.3 295.0,395.2 297.4,394.5 299.9,394.3 302.4,394.3 305.0,394.7 307.4,395.3 313.3,397.6 319.5,401.0 325.2,404.9 328.3,407.5 331.3,410.2 338.8,418.4 340.6,419.6 342.7,420.2 343.9,420.2 345.4,419.9 348.4,418.7 351.9,416.5 355.3,413.6 358.9,409.6 361.3,405.9 362.0,404.3 362.3,403.0 362.2,402.0 361.8,401.6 360.8,401.5 359.0,402.0 354.3,404.4 347.3,409.1 344.5,411.3 342.3,413.3 340.9,414.9 339.9,416.3 339.3,417.6 339.1,419.0 339.2,420.1 339.8,421.1 340.7,421.7 342.0,422.0 343.5,421.9 344.9,421.6 348.3,420.0 352.2,417.3 355.9,414.0 359.6,409.8 362.4,405.5 363.3,403.6 363.7,402.1 363.6,401.0 363.1,400.5 362.0,400.3 359.9,400.9 357.3,402.1 354.4,403.8 346.0,409.5 343.0,411.9 340.6,414.0 339.2,415.7 338.0,417.5 337.4,419.0 337.2,420.4 337.4,421.8 338.0,422.9 339.1,423.7 340.4,424.1 342.6,423.9 345.6,422.9 348.5,421.4 351.9,419.0 355.1,416.2 358.4,412.8 361.4,408.9 363.6,405.7"/>
<polyline fill="none" stroke="#77d153" points="320.4,466.5 309.3,465.6 303.4,464.6 298.3,463.3 292.7,461.0 288.6,458.7 286.5,457.3 282.3,453.8 278.0,449.4 273.9,443.9 270.2,437.2 268.6,433.5 267.1,429.5 265.8,425.3 264.8,421.0 264.1,416.5 263.6,411.9 263.5,407.3 263.7,402.7 264.2,398.3 265.1,394.0 266.3,390.0 267.8,386.3 269.5,383.0 271.6,380.0 273.9,377.5 276.3,375.4 279.0,373.8 281.7,372.5 284.6,371.7 287.5,371.3 290.5,371.2 293.5,371.3 296.4,371.8 302.2,373.3 307.8,375.3 315.6,378.9 330.6,386.6 337.3,389.9 343.9,392.6 354.2,396.0 354.8,396.5 355.0,397.3 354.8,398.0 354.0,399.2 351.7,401.7 342.3,410.8 339.9,413.7 338.4,416.1 337.6,418.7 337.5,419.9 337.7,421.0 338.1,421.9 338.8,422.6 339.6,423.1 340.6,423.4 342.0,423.4 343.6,423.1 345.7,422.4 347.6,421.4 351.7,418.7 355.8,415.1 359.9,410.5 363.3,405.5 364.4,403.3 365.0,401.4 365.0,400.0 364.5,399.4 363.3,399.2 361.6,399.6 358.8,400.8 355.5,402.7 345.4,409.4 341.6,412.4 338.8,414.9 337.3,416.6 336.2,418.4 335.4,420.3 335.2,422.0 335.4,423.7 336.1,425.2 337.3,426.1 338.7,426.6 340.4,426.6 342.2,426.2 344.4,425.4 346.5,424.4 348.9,422.9 351.6,420.8 356.5,416.4 361.5,410.7 365.3,405.1 366.8,402.2 367.5,400.2 367.8,398.6 367.6,397.5 367.2,397.0 366.6,396.8 364.7,397.0 362.2,398.0 359.1,399.6 352.5,403.7 343.4,409.8 338.5,413.4 335.4,416.1 333.0,419.0 331.2,422.3 330.3,425.6 329.2,432.4 328.3,435.0 326.8,437.4 324.7,439.2 322.7,440.4 320.4,441.3 317.8,442.0 315.2,442.4 312.7,442.6 309.9,442.4 306.7,441.9 304.1,441.1 300.4,439.5 297.4,437.6 294.5,435.2 292.6,433.2 290.0,429.7 288.4,427.0 286.4,422.4 285.5,419.1 284.7,414.0 284.7,410.5 285.1,407.2 285.9,404.2 287.1,401.4 288.7,399.0 290.5,397.0 292.7,395.5 296.2,394.1 298.8,393.7 301.4,393.7 304.0,394.0 307.9,394.9 313.9,397.3 320.1,400.8 325.8,404.8 332.0,410.1 339.4,417.8 341.3,419.0 343.1,419.5 345.8,419.2 348.7,418.1 352.0,415.9 355.2,413.2 358.6,409.4 360.8,406.0 361.4,404.6 361.7,403.4 361.5,402.5 360.9,402.1 359.3,402.2 356.9,403.2 353.6,405.0 349.4,407.8 346.0,410.3 343.4,412.6 341.6,414.7 340.4,416.7 339.9,418.7 340.1,419.6 340.6,420.3 341.3,420.8 342.2,421.0 344.4,420.9 347.1,420.0 350.1,418.3 353.0,416.1 356.1,413.2"/>
<polyline fill="none" stroke="#8bd646" points="349.8,458.8 347.6,457.2 346.0,455.7 344.9,454.2 344.1,452.8 343.7,451.4 343.5,450.1 343.6,448.8 344.2,446.9 345.3,444.9 347.4,442.0 358.2,429.9 364.4,422.3 369.8,414.9 375.2,406.6 379.9,397.8 381.8,393.7 383.2,389.8 384.1,386.5 384.3,383.9 383.9,382.1 383.3,381.5 382.6,381.2 380.7,381.4 379.5,381.8 376.6,383.2 371.4,386.6 357.1,397.0 349.0,402.5 341.7,406.9 334.0,410.8 327.7,413.3 321.2,415.1 315.2,415.9 310.2,415.7 310.9,417.3 311.1,418.4 310.7,419.4 309.8,419.9 308.9,419.9 308.2,419.6 307.4,419.1 306.9,418.4 306.6,417.6 306.7,416.8 307.0,416.2 307.6,415.8 308.5,415.7 309.4,416.0 310.2,416.6 310.8,417.4 311.1,418.3 311.0,419.1 310.5,419.7 309.8,420.1 308.9,420.0 308.1,419.7 307.3,419.1 306.8,418.4 306.5,417.5 306.5,416.7 306.9,416.1 307.5,415.7 308.4,415.6 309.4,415.9 310.3,416.5 310.9,417.4 311.2,418.4 311.1,419.2 310.5,419.9 309.8,420.2 308.8,420.2 308.0,419.8 307.2,419.2 306.7,418.4 306.4,417.5 306.4,416.7 306.7,416.1 307.4,415.6 308.4,415.5 309.4,415.8 310.3,416.4 311.0,417.3 311.4,418.3 311.2,419.3 310.7,420.0 309.9,420.3 308.9,420.3 308.0,420.0 307.1,419.3 306.6,418.5 306.2,417.6 306.2,416.7 306.6,416.0 307.3,415.5 308.3,415.3 309.4,415.6 310.4,416.3 311.2,417.3 311.5,418.3 311.4,419.3 310.8,420.1 309.9,420.5 309.0,420.5 308.0,420.1 307.1,419.5 306.5,418.7 306.1,417.6 306.1,416.7 306.4,415.9 307.0,415.4 308.2,415.1 309.5,415.5 310.6,416.3 311.4,417.5 311.7,418.7 311.4,419.8 310.5,420.5 309.3,420.7"/>
<polyline fill="none" stroke="#a2da37" points="346.8,462.9 344.2,461.5 342.1,460.2 339.7,458.3 338.1,456.7 337.0,455.3 336.3,453.7 336.1,452.3 336.6,450.7 337.4,449.5 338.9,447.8 349.6,438.3 357.1,430.8 363.5,423.5 370.5,414.1 374.8,407.7 377.4,403.2 380.9,396.4 382.8,392.1 384.2,388.3 385.0,385.0 385.0,382.5 384.8,381.5 384.4,380.9 383.7,380.4 382.9,380.3 381.9,380.4 379.4,381.2 376.2,383.0 370.6,386.8 357.9,396.2 349.5,402.0 341.9,406.7 333.8,410.7 327.3,413.2 324.1,414.1 320.5,414.9 317.6,415.3 314.4,415.4 311.7,415.2 309.9,414.7 310.7,415.3 311.5,416.3 312.0,417.4 312.2,418.4 312.0,419.3 311.7,420.1 311.0,420.7 310.1,421.0 309.0,421.0 307.8,420.5 306.8,419.8 306.0,418.8 305.6,417.7 305.6,416.6 305.9,415.6 306.7,415.0 307.8,414.7 309.1,414.9 310.4,415.6 311.5,416.6 312.1,417.8 312.2,419.1 311.8,420.2 310.8,421.0 309.7,421.2 308.3,421.0 307.1,420.3 306.1,419.3 305.5,418.0 305.4,416.6 305.7,415.6 306.5,414.8 307.7,414.5 309.2,414.7 310.6,415.5 311.7,416.7 312.3,418.0 312.4,419.3 311.9,420.5 310.9,421.2 309.6,421.4 308.2,421.1 306.9,420.4 305.9,419.2 305.2,417.8 305.1,416.6 305.5,415.4 306.4,414.6 307.7,414.2 309.2,414.5 310.7,415.3 311.9,416.6 312.5,418.0 312.6,419.4 312.1,420.6 311.1,421.4 309.7,421.7 308.2,421.4 306.9,420.6 305.7,419.4 305.0,417.9 304.9,416.5 305.3,415.3 306.2,414.4 307.6,414.0 309.2,414.3 310.8,415.2 312.1,416.5 312.8,418.0 312.9,419.5 312.4,420.7 311.3,421.6 309.9,421.9 308.3,421.6 306.8,420.8 305.6,419.6 304.8,418.0 304.6,416.5 305.0,415.2 306.0,414.2 307.1,413.8 308.5,413.8 309.9,414.3 311.2,415.2 312.3,416.4 313.0,417.8 313.2,419.1 313.0,420.3"/>
<polyline fill="none" stroke="#bade28" points="311.8,435.5 311.3,436.1 310.0,436.6 307.3,436.6 304.3,435.8 301.0,434.2 298.2,432.1 296.1,430.0 293.5,426.6 291.9,423.5 290.7,420.1 289.9,416.5 289.7,412.9 289.9,410.6 290.7,407.3 291.6,405.3 293.4,402.8 295.6,400.9 297.2,400.1 300.0,399.3 301.9,399.1 304.8,399.2 307.7,399.8 310.5,400.8 314.0,402.3 317.1,404.2 319.9,406.1 322.8,408.5 325.2,410.7 327.4,413.3 330.1,417.3 333.6,424.6 334.9,426.6 335.7,427.3 336.7,427.8 337.9,428.1 339.1,428.2 341.1,427.8 343.3,427.1 347.8,424.6 353.1,420.6 357.7,416.1 362.5,410.5 366.6,404.4 367.8,401.9 368.7,399.7 369.1,397.8 368.9,396.5 368.2,395.8 367.5,395.6 366.5,395.7 364.6,396.3 361.5,397.8 352.4,403.3 338.3,412.8 334.0,416.3 331.1,419.6 329.3,422.7 326.4,429.6 325.3,431.4 323.9,433.0 321.7,434.8 319.2,436.1 316.5,436.9 313.5,437.4 310.7,437.3 307.4,436.8 304.6,435.9 301.6,434.5 298.5,432.3 296.3,430.2 294.3,427.6 292.4,424.6 291.0,421.3 290.0,417.7 289.6,413.9 289.6,411.5 290.2,408.0 291.0,405.9 292.6,403.2 294.7,401.1 296.3,400.0 299.1,399.0 301.0,398.7 303.9,398.8 306.9,399.3 309.8,400.1 312.5,401.2 315.9,403.0 318.9,404.9 322.1,407.4 324.7,409.7 327.2,412.3 330.2,416.5 334.0,423.7 335.4,425.8 336.3,426.5 337.3,427.0 339.5,427.3 341.3,427.0 343.4,426.4 347.8,424.1 352.8,420.3 357.3,416.0 361.9,410.7 365.8,404.9 367.4,401.8 368.1,399.8 368.4,398.1 368.2,396.9 367.4,396.3 365.6,396.3 363.8,397.0 360.8,398.4 350.5,404.8 338.3,413.2 334.4,416.6 332.8,418.4 331.6,420.0 330.0,423.3 327.5,431.3 326.4,433.3 325.1,434.9 322.8,436.8 320.1,438.1 316.8,439.1 313.1,439.6 309.9,439.4 306.2,438.7 303.0,437.6 299.7,435.7 297.1,433.8 294.6,431.3 292.3,428.3 290.3,424.8 288.8,420.9 287.8,416.7 287.5,412.4 287.7,409.6 288.6,405.7 289.7,403.4 291.7,400.5 294.3,398.4 296.3,397.5 298.4,396.9 300.6,396.6 304.0,396.8 306.2,397.1 309.5,398.1 312.6,399.4 315.5,400.8 321.3,404.5 326.2,408.5 330.8,413.3 336.8,421.5 338.6,422.8 340.5,423.4 342.6,423.4 345.3,422.6 348.1,421.2 351.3,419.0 354.4,416.5 357.6,413.3 360.2,410.2 362.4,407.1"/>
<polyline fill="none" stroke="#d2e21b" points="319.7,455.7 313.8,456.3 308.1,456.1 303.3,455.3 300.6,454.5 297.7,453.4 293.1,451.0 288.2,447.5 285.0,444.3 283.4,442.5 280.3,438.4 277.5,433.5 276.2,430.8 274.1,424.9 272.6,418.6 271.8,412.0 271.9,405.4 272.9,399.1 273.7,396.2 274.8,393.5 276.0,391.0 277.4,388.7 279.0,386.7 280.8,385.0 282.7,383.5 284.7,382.3 286.8,381.4 288.9,380.8 293.4,380.2 297.9,380.4 302.4,381.3 306.8,382.6 312.9,385.1 318.6,387.9 337.5,398.3 347.9,403.7 349.7,404.8 350.6,405.8 350.7,406.8 350.2,408.1 347.6,412.2 347.4,413.3 347.8,413.9 348.7,414.0 349.9,413.6 352.6,411.8 354.1,410.4 355.1,409.1 355.5,408.0 355.3,407.4 354.5,407.3 353.1,407.9 349.7,410.2 348.4,411.5 347.6,412.7 347.3,413.5 347.6,414.1 348.5,414.2 349.7,413.9 351.3,413.0 352.8,411.8 354.2,410.5 355.2,409.1 355.8,407.9 355.6,407.2 354.8,407.1 353.2,407.7 351.4,408.8 349.5,410.3 348.1,411.6 347.3,412.8 347.0,413.8 347.4,414.4 348.3,414.5 349.6,414.1 351.2,413.2 352.8,411.9 354.3,410.4 355.5,408.9 356.0,407.7 355.9,407.0 355.0,406.9 353.3,407.5 351.3,408.7 349.3,410.3 347.8,411.7 347.0,413.0 346.7,414.0 347.1,414.7 348.1,414.8 349.6,414.3 351.2,413.4 352.9,412.1 354.5,410.5 355.7,408.9 356.3,407.5 356.2,406.7 355.2,406.6 353.4,407.3 351.3,408.6 349.1,410.3 347.6,411.8 346.6,413.2 346.4,414.3 346.8,415.0 348.0,415.0 349.5,414.5 351.2,413.5 353.1,412.1 354.8,410.4 356.1,408.7 356.7,407.2 356.7,406.7 356.4,406.4 355.8,406.3 354.8,406.5 351.8,408.1 348.8,410.4 346.6,412.8 346.1,413.7 346.0,414.5 346.2,415.1 346.8,415.4 347.7,415.4 348.9,415.0 351.4,413.6"/>
<polyline fill="none" stroke="#eae51a" points="340.5,458.6 331.1,454.7 327.1,453.6 323.9,453.4 316.2,453.8 312.1,453.9 308.1,453.5 303.5,452.6 299.5,451.3 295.3,449.3 292.4,447.4 289.3,445.0 284.9,440.4 282.1,436.5 279.5,432.1 278.4,429.6 276.4,424.4 275.0,418.7 274.3,412.7 274.3,406.8 275.1,401.1 276.7,395.9 277.7,393.6 279.0,391.5 280.4,389.6 281.9,387.9 283.6,386.5 285.3,385.3 287.2,384.3 291.1,383.1 295.2,382.7 299.3,383.0 305.5,384.4 311.3,386.5 316.6,389.0 324.4,393.2 348.4,407.3 349.5,408.3 350.0,409.1 350.2,409.9 350.0,411.4 350.1,411.7 350.8,411.7 351.9,411.0 352.8,410.1 352.9,409.5 352.1,409.6 351.0,410.4 350.2,411.3 350.2,411.9 351.0,411.7 352.1,410.9 352.9,409.9 352.9,409.4 352.1,409.6 350.9,410.4 350.1,411.4 350.1,411.9 351.0,411.8 352.1,410.9 353.0,409.9 353.0,409.3 352.2,409.5 350.8,410.4 350.0,411.4 349.9,411.8 350.0,412.0 350.9,411.8 352.2,411.0 353.1,409.9 353.1,409.3 352.2,409.4 350.8,410.4 349.9,411.4 349.8,411.9 349.9,412.1 350.8,411.9 352.2,411.0 353.2,409.8 353.3,409.4 353.2,409.2 352.0,409.5 350.4,410.7 349.7,411.9 349.9,412.2 350.3,412.2"/>
<polyline fill="none" stroke="#fde725" points="299.3,442.0 299.4,443.2 299.2,443.9 298.5,444.3 297.0,444.2 294.8,443.3 293.1,442.2 291.3,440.7 289.4,438.8 286.5,435.1 283.8,430.5 281.6,425.0 280.5,420.9 279.8,416.6 279.6,412.3 279.9,408.0 280.8,403.9 282.1,400.2 284.0,397.0 286.2,394.4 288.8,392.4 290.2,391.6 293.2,390.5 294.8,390.2 297.9,390.0 301.1,390.2 304.3,390.7 310.4,392.7 317.2,395.9 324.1,400.0 332.3,405.7 342.0,413.3 343.8,414.5 345.6,415.1 347.1,415.1 349.0,414.7 350.9,413.8 352.9,412.4 355.0,410.5 356.8,408.2 357.5,406.6 357.4,406.0 357.1,405.7 355.8,405.7 353.4,406.8 350.5,408.7 347.7,411.0 346.1,412.7 345.1,414.4 345.1,415.6 345.5,416.0 346.1,416.2 347.5,416.1 349.5,415.3 351.7,414.0 353.9,412.1 356.0,409.8 357.5,407.6 358.0,406.1 357.9,405.6 357.6,405.3 356.9,405.2 355.8,405.5 353.2,406.7 350.0,408.8 347.1,411.3 345.5,413.1 344.6,414.8 344.5,415.6 344.7,416.1 345.1,416.5 345.7,416.7 347.3,416.6 349.4,415.7 351.7,414.2 354.2,412.2 356.4,409.7 358.0,407.3 358.5,405.7 358.4,405.2 358.0,404.9 357.4,404.8 356.3,405.0 353.4,406.4 349.7,408.9 346.6,411.5 344.9,413.4 344.0,415.2 343.9,416.0 344.1,416.6 344.6,417.0 345.2,417.2 346.8,417.1 349.1,416.2 351.6,414.7 354.2,412.5 356.6,409.9 358.4,407.2 359.0,405.4 358.9,404.8 358.6,404.4 357.9,404.3 356.7,404.6 353.7,406.0 349.6,408.7 346.2,411.5 344.2,413.8 343.3,415.7 343.3,416.5 343.5,417.1 344.0,417.6 344.7,417.8 346.5,417.7 349.0,416.7 351.6,415.0 354.5,412.6 357.1,409.7 358.9,407.1 359.7,405.0 359.6,404.3 359.2,403.9 358.5,403.8 357.3,404.0 353.9,405.6 349.5,408.5 345.6,411.8 343.5,414.2 342.5,416.2 342.5,417.0 342.7,417.7 343.2,418.3 344.0,418.6 345.2,418.6 346.6,418.3 350.0,416.7 353.6,413.9 357.0,410.5 359.5,406.8 360.2,405.3 360.4,404.1 360.2,403.4 359.4,403.1 358.0,403.4 356.3,404.0"/></g></svg><div class="a" style="left:439px;top:251px;width:457px;height:5px;background:#fff;"></div><div class="a" style="left:439px;top:256px;width:457px;height:1px;background:#E0E0E0;"></div><div class="a" style="left:439px;top:257px;width:457px;height:244.60000000000002px;background:#fff;"></div><div class="a" style="left:439px;top:234px;width:100px;height:17px;background:#fff;"></div><svg class="a" style="left:445px;top:237px;" width="10" height="11" viewBox="0 0 10 11"><path d="M1 1.3h5.3l2.6 2.6v5.7H1z" fill="#4F6E96"/><path d="M6.3 1.3v2.6h2.6" fill="#9FB7D6"/><path d="M2.6 5h4.6M2.6 6.6h4.6M2.6 8.1h3.2" stroke="#A9BDD6" stroke-width="0.7"/></svg><div class="a t" style="left:457.2px;top:237.06px;line-height:12.48px;font-size:9.6px;color:#222222;font-weight:400;font-family:'Liberation Sans', sans-serif;font-style:normal;">lorenz.py</div><svg class="a" style="left:523.5px;top:238px;" width="9" height="9" viewBox="0 0 9 9"><path d="M1.4 1.4l6.2 6.2M7.6 1.4l-6.2 6.2" stroke="#555" stroke-width="1.1"/></svg><div class="a" style="left:439px;top:257px;width:457px;height:244.6px;overflow:hidden"><div class="a" style="left:0px;top:0px;width:26.6px;height:245px;background:#EEEEEE;"></div><div class="a" style="left:26.6px;top:0px;width:0.6999999999999993px;height:245px;background:#DDDDDD;"></div><div class="a t" style="left:-581.6px;width:600px;text-align:right;top:-5.50px;line-height:11.9px;font-size:9.15px;color:#999;font-weight:400;font-family:'Liberation Mono', monospace;font-style:normal;-webkit-text-stroke:0.08px currentColor;">8</div><div class="a t" style="left:-581.6px;width:600px;text-align:right;top:6.35px;line-height:11.9px;font-size:9.15px;color:#999;font-weight:400;font-family:'Liberation Mono', monospace;font-style:normal;-webkit-text-stroke:0.08px currentColor;">9</div><div class="a t" style="left:30.30000000000001px;top:6.35px;line-height:11.9px;font-size:9.15px;color:#222;font-weight:400;font-family:'Liberation Mono', monospace;font-style:normal;-webkit-text-stroke:0.08px currentColor;white-space:pre;"><b style="color:#008000">def</b> <span style="color:#0000FF">solve_lorenz</span>(N<span style="color:#8a8a8a">=</span><span style="color:#008800">10</span>, max_time<span style="color:#8a8a8a">=</span><span style="color:#008800">4.0</span>, sigma<span style="color:#8a8a8a">=</span><span style="color:#008800">10.0</span>, beta<span style="color:#8a8a8a">=</span><span style="color:#008800">8.</span><span style="color:#AA22FF">/</span><span style="color:#008800">3</span>, rho<span style="color:#8a8a8a">=</span><span style="color:#008800">28.0</span>):</div><div class="a t" style="left:-581.6px;width:600px;text-align:right;top:18.20px;line-height:11.9px;font-size:9.15px;color:#999;font-weight:400;font-family:'Liberation Mono', monospace;font-style:normal;-webkit-text-stroke:0.08px currentColor;">10</div><div class="a t" style="left:30.30000000000001px;top:18.20px;line-height:11.9px;font-size:9.15px;color:#222;font-weight:400;font-family:'Liberation Mono', monospace;font-style:normal;-webkit-text-stroke:0.08px currentColor;white-space:pre;">    <span style="color:#BA2121">"""Plot a solution to the Lorenz differential equations."""</span></div><div class="a t" style="left:-581.6px;width:600px;text-align:right;top:30.05px;line-height:11.9px;font-size:9.15px;color:#999;font-weight:400;font-family:'Liberation Mono', monospace;font-style:normal;-webkit-text-stroke:0.08px currentColor;">11</div><div class="a t" style="left:30.30000000000001px;top:30.05px;line-height:11.9px;font-size:9.15px;color:#222;font-weight:400;font-family:'Liberation Mono', monospace;font-style:normal;-webkit-text-stroke:0.08px currentColor;white-space:pre;">    fig <span style="color:#8a8a8a">=</span> plt.<span style="color:#0000FF">figure</span>()</div><div class="a t" style="left:-581.6px;width:600px;text-align:right;top:41.90px;line-height:11.9px;font-size:9.15px;color:#999;font-weight:400;font-family:'Liberation Mono', monospace;font-style:normal;-webkit-text-stroke:0.08px currentColor;">12</div><div class="a t" style="left:30.30000000000001px;top:41.90px;line-height:11.9px;font-size:9.15px;color:#222;font-weight:400;font-family:'Liberation Mono', monospace;font-style:normal;-webkit-text-stroke:0.08px currentColor;white-space:pre;">    ax <span style="color:#8a8a8a">=</span> fig.<span style="color:#0000FF">add_axes</span>([<span style="color:#008800">0</span>, <span style="color:#008800">0</span>, <span style="color:#008800">1</span>, <span style="color:#008800">1</span>], projection<span style="color:#8a8a8a">=</span><span style="color:#BA2121">'3d'</span>)</div><div class="a t" style="left:-581.6px;width:600px;text-align:right;top:53.75px;line-height:11.9px;font-size:9.15px;color:#999;font-weight:400;font-family:'Liberation Mono', monospace;font-style:normal;-webkit-text-stroke:0.08px currentColor;">13</div><div class="a t" style="left:30.30000000000001px;top:53.75px;line-height:11.9px;font-size:9.15px;color:#222;font-weight:400;font-family:'Liberation Mono', monospace;font-style:normal;-webkit-text-stroke:0.08px currentColor;white-space:pre;">    ax.<span style="color:#0000FF">axis</span>(<span style="color:#BA2121">'off'</span>)</div><div class="a t" style="left:-581.6px;width:600px;text-align:right;top:65.60px;line-height:11.9px;font-size:9.15px;color:#999;font-weight:400;font-family:'Liberation Mono', monospace;font-style:normal;-webkit-text-stroke:0.08px currentColor;">14</div><div class="a t" style="left:-581.6px;width:600px;text-align:right;top:77.45px;line-height:11.9px;font-size:9.15px;color:#999;font-weight:400;font-family:'Liberation Mono', monospace;font-style:normal;-webkit-text-stroke:0.08px currentColor;">15</div><div class="a t" style="left:30.30000000000001px;top:77.45px;line-height:11.9px;font-size:9.15px;color:#222;font-weight:400;font-family:'Liberation Mono', monospace;font-style:normal;-webkit-text-stroke:0.08px currentColor;white-space:pre;">    <i style="color:#408080"># prepare the axes limits</i></div><div class="a t" style="left:-581.6px;width:600px;text-align:right;top:89.30px;line-height:11.9px;font-size:9.15px;color:#999;font-weight:400;font-family:'Liberation Mono', monospace;font-style:normal;-webkit-text-stroke:0.08px currentColor;">16</div><div class="a t" style="left:30.30000000000001px;top:89.30px;line-height:11.9px;font-size:9.15px;color:#222;font-weight:400;font-family:'Liberation Mono', monospace;font-style:normal;-webkit-text-stroke:0.08px currentColor;white-space:pre;">    ax.<span style="color:#0000FF">set_xlim</span>((<span style="color:#AA22FF">-</span><span style="color:#008800">25</span>, <span style="color:#008800">25</span>))</div><div class="a t" style="left:-581.6px;width:600px;text-align:right;top:101.15px;line-height:11.9px;font-size:9.15px;color:#999;font-weight:400;font-family:'Liberation Mono', monospace;font-style:normal;-webkit-text-stroke:0.08px currentColor;">17</div><div class="a t" style="left:30.30000000000001px;top:101.15px;line-height:11.9px;font-size:9.15px;color:#222;font-weight:400;font-family:'Liberation Mono', monospace;font-style:normal;-webkit-text-stroke:0.08px currentColor;white-space:pre;">    ax.<span style="color:#0000FF">set_ylim</span>((<span style="color:#AA22FF">-</span><span style="color:#008800">35</span>, <span style="color:#008800">35</span>))</div><div class="a t" style="left:-581.6px;width:600px;text-align:right;top:113.00px;line-height:11.9px;font-size:9.15px;color:#999;font-weight:400;font-family:'Liberation Mono', monospace;font-style:normal;-webkit-text-stroke:0.08px currentColor;">18</div><div class="a t" style="left:30.30000000000001px;top:113.00px;line-height:11.9px;font-size:9.15px;color:#222;font-weight:400;font-family:'Liberation Mono', monospace;font-style:normal;-webkit-text-stroke:0.08px currentColor;white-space:pre;">    ax.<span style="color:#0000FF">set_zlim</span>((<span style="color:#008800">5</span>, <span style="color:#008800">55</span>))</div><div class="a t" style="left:-581.6px;width:600px;text-align:right;top:124.85px;line-height:11.9px;font-size:9.15px;color:#999;font-weight:400;font-family:'Liberation Mono', monospace;font-style:normal;-webkit-text-stroke:0.08px currentColor;">19</div><div class="a t" style="left:-581.6px;width:600px;text-align:right;top:136.70px;line-height:11.9px;font-size:9.15px;color:#999;font-weight:400;font-family:'Liberation Mono', monospace;font-style:normal;-webkit-text-stroke:0.08px currentColor;">20</div><div class="a t" style="left:30.30000000000001px;top:136.70px;line-height:11.9px;font-size:9.15px;color:#222;font-weight:400;font-family:'Liberation Mono', monospace;font-style:normal;-webkit-text-stroke:0.08px currentColor;white-space:pre;">    <b style="color:#008000">def</b> <span style="color:#0000FF">lorenz_deriv</span>(x_y_z, t0, sigma<span style="color:#8a8a8a">=</span>sigma, beta<span style="color:#8a8a8a">=</span>beta, rho<span style="color:#8a8a8a">=</span>rho):</div><div class="a t" style="left:-581.6px;width:600px;text-align:right;top:148.55px;line-height:11.9px;font-size:9.15px;color:#999;font-weight:400;font-family:'Liberation Mono', monospace;font-style:normal;-webkit-text-stroke:0.08px currentColor;">21</div><div class="a t" style="left:30.30000000000001px;top:148.55px;line-height:11.9px;font-size:9.15px;color:#222;font-weight:400;font-family:'Liberation Mono', monospace;font-style:normal;-webkit-text-stroke:0.08px currentColor;white-space:pre;">        <span style="color:#BA2121">"""Compute the time-derivative of a Lorenz system."""</span></div><div class="a t" style="left:-581.6px;width:600px;text-align:right;top:160.40px;line-height:11.9px;font-size:9.15px;color:#999;font-weight:400;font-family:'Liberation Mono', monospace;font-style:normal;-webkit-text-stroke:0.08px currentColor;">22</div><div class="a t" style="left:30.30000000000001px;top:160.40px;line-height:11.9px;font-size:9.15px;color:#222;font-weight:400;font-family:'Liberation Mono', monospace;font-style:normal;-webkit-text-stroke:0.08px currentColor;white-space:pre;">        x, y, z <span style="color:#8a8a8a">=</span> x_y_z</div><div class="a t" style="left:-581.6px;width:600px;text-align:right;top:172.25px;line-height:11.9px;font-size:9.15px;color:#999;font-weight:400;font-family:'Liberation Mono', monospace;font-style:normal;-webkit-text-stroke:0.08px currentColor;">23</div><div class="a t" style="left:30.30000000000001px;top:172.25px;line-height:11.9px;font-size:9.15px;color:#222;font-weight:400;font-family:'Liberation Mono', monospace;font-style:normal;-webkit-text-stroke:0.08px currentColor;white-space:pre;">        <b style="color:#008000">return</b> [sigma <span style="color:#AA22FF;position:relative;top:1.9px;font-weight:700;font-size:10.5px;line-height:0">*</span> (y <span style="color:#AA22FF">-</span> x), x <span style="color:#AA22FF;position:relative;top:1.9px;font-weight:700;font-size:10.5px;line-height:0">*</span> (rho <span style="color:#AA22FF">-</span> z) <span style="color:#AA22FF">-</span> y, x <span style="color:#AA22FF;position:relative;top:1.9px;font-weight:700;font-size:10.5px;line-height:0">*</span> y <span style="color:#AA22FF">-</span> beta <span style="color:#AA22FF;position:relative;top:1.9px;font-weight:700;font-size:10.5px;line-height:0">*</span> z]</div><div class="a t" style="left:-581.6px;width:600px;text-align:right;top:184.10px;line-height:11.9px;font-size:9.15px;color:#999;font-weight:400;font-family:'Liberation Mono', monospace;font-style:normal;-webkit-text-stroke:0.08px currentColor;">24</div><div class="a t" style="left:-581.6px;width:600px;text-align:right;top:195.95px;line-height:11.9px;font-size:9.15px;color:#999;font-weight:400;font-family:'Liberation Mono', monospace;font-style:normal;-webkit-text-stroke:0.08px currentColor;">25</div><div class="a t" style="left:30.30000000000001px;top:195.95px;line-height:11.9px;font-size:9.15px;color:#222;font-weight:400;font-family:'Liberation Mono', monospace;font-style:normal;-webkit-text-stroke:0.08px currentColor;white-space:pre;">    <i style="color:#408080"># Choose random starting points, uniformly distributed from -15 to 15</i></div><div class="a t" style="left:-581.6px;width:600px;text-align:right;top:207.80px;line-height:11.9px;font-size:9.15px;color:#999;font-weight:400;font-family:'Liberation Mono', monospace;font-style:normal;-webkit-text-stroke:0.08px currentColor;">26</div><div class="a t" style="left:30.30000000000001px;top:207.80px;line-height:11.9px;font-size:9.15px;color:#222;font-weight:400;font-family:'Liberation Mono', monospace;font-style:normal;-webkit-text-stroke:0.08px currentColor;white-space:pre;">    np.<span style="color:#0000FF">random</span>.<span style="color:#0000FF">seed</span>(<span style="color:#008800">1</span>)</div><div class="a t" style="left:-581.6px;width:600px;text-align:right;top:219.65px;line-height:11.9px;font-size:9.15px;color:#999;font-weight:400;font-family:'Liberation Mono', monospace;font-style:normal;-webkit-text-stroke:0.08px currentColor;">27</div><div class="a t" style="left:30.30000000000001px;top:219.65px;line-height:11.9px;font-size:9.15px;color:#222;font-weight:400;font-family:'Liberation Mono', monospace;font-style:normal;-webkit-text-stroke:0.08px currentColor;white-space:pre;">    x0 <span style="color:#8a8a8a">=</span> <span style="color:#AA22FF">-</span><span style="color:#008800">15</span> <span style="color:#AA22FF">+</span> <span style="color:#008800">30</span> <span style="color:#AA22FF;position:relative;top:1.9px;font-weight:700;font-size:10.5px;line-height:0">*</span> np.<span style="color:#0000FF">random</span>.<span style="color:#0000FF">random</span>((N, <span style="color:#008800">3</span>))</div><div class="a t" style="left:-581.6px;width:600px;text-align:right;top:231.50px;line-height:11.9px;font-size:9.15px;color:#999;font-weight:400;font-family:'Liberation Mono', monospace;font-style:normal;-webkit-text-stroke:0.08px currentColor;">28</div></div>
</body></html>
